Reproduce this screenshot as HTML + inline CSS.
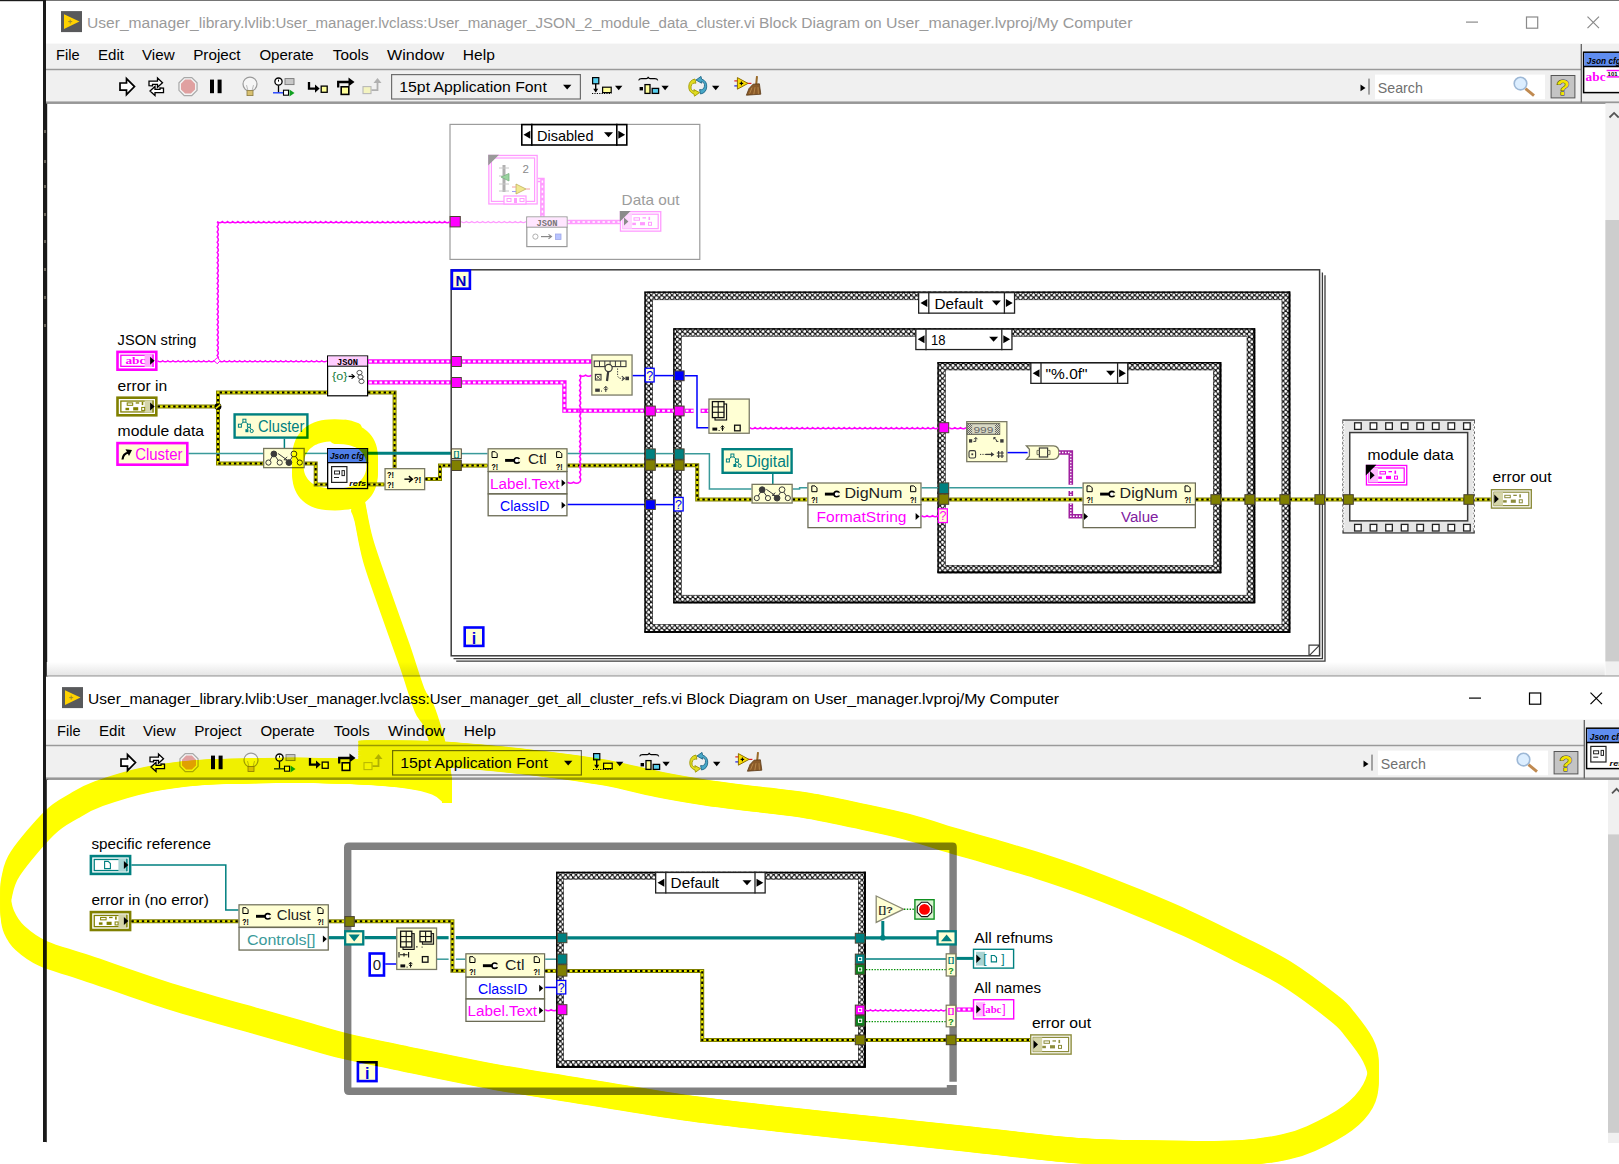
<!DOCTYPE html>
<html><head><meta charset="utf-8"><title>LabVIEW</title>
<style>html,body{margin:0;padding:0;background:#fff;overflow:hidden}svg{display:block}text{white-space:pre}</style>
</head><body>
<svg width="1619" height="1164" viewBox="0 0 1619 1164" shape-rendering="auto">
<defs>
<pattern id="hatch" width="5.2" height="5.2" patternUnits="userSpaceOnUse">
<rect width="5.2" height="5.2" fill="#161616"/>
<path d="M1.3 -0.55L3.15 1.3L1.3 3.15L-0.55 1.3ZM3.9 2.05L5.75 3.9L3.9 5.75L2.05 3.9Z" fill="#fff"/>
</pattern>
<linearGradient id="shadow" x1="0" y1="0" x2="0" y2="1"><stop offset="0" stop-color="#fff"/><stop offset="1" stop-color="#e4e4e4"/></linearGradient>
<pattern id="hatch2" width="2" height="2" patternUnits="userSpaceOnUse"><rect width="2" height="2" fill="#d8d8c4"/><rect width="1" height="1" fill="#666"/><rect x="1" y="1" width="1" height="1" fill="#666"/></pattern></defs>
<rect width="1619" height="1164" fill="#fff"/>

<rect x="0.00" y="0.00" width="1619.00" height="1.20" fill="#1a1a1a" />
<rect x="43.00" y="0.00" width="4.20" height="676.00" fill="#1a1a1a" />
<rect x="43.00" y="676.00" width="5.20" height="466.80" fill="#1a1a1a" />
<rect x="44.20" y="130.00" width="1.60" height="3.00" fill="#7a7468" />
<rect x="44.20" y="160.00" width="1.60" height="3.00" fill="#7a7468" />
<rect x="44.20" y="185.00" width="1.60" height="3.00" fill="#7a7468" />
<rect x="44.20" y="213.00" width="1.60" height="3.00" fill="#7a7468" />
<rect x="44.20" y="240.00" width="1.60" height="3.00" fill="#7a7468" />
<rect x="44.20" y="268.00" width="1.60" height="3.00" fill="#7a7468" />
<rect x="44.20" y="296.00" width="1.60" height="3.00" fill="#7a7468" />
<rect x="44.20" y="324.00" width="1.60" height="3.00" fill="#7a7468" />
<rect x="46.00" y="0.60" width="1573.00" height="43.50" fill="#fff" />
<rect x="61.00" y="11.10" width="21.00" height="21.00" fill="#58595b" />
<path d="M64.00 14.30 L79.50 21.60 L64.00 28.90Z" fill="#ffd200" />
<path d="M68.2 21.6h4M70.2 19.6v4" fill="none" stroke="#9a8a30" stroke-width="1" />
<text x="87.00" y="28.20" font-size="15.3" fill="#9a9a9a" font-family="Liberation Sans, sans-serif" textLength="188.50" lengthAdjust="spacingAndGlyphs" >User_manager_library.lvlib:</text>
<text x="275.50" y="28.20" font-size="15.3" fill="#9a9a9a" font-family="Liberation Sans, sans-serif" textLength="152.00" lengthAdjust="spacingAndGlyphs" >User_manager.lvclass:</text>
<text x="427.50" y="28.20" font-size="15.3" fill="#9a9a9a" font-family="Liberation Sans, sans-serif" textLength="331.50" lengthAdjust="spacingAndGlyphs" >User_manager_JSON_2_module_data_cluster.vi </text>
<text x="759.00" y="28.20" font-size="15.3" fill="#9a9a9a" font-family="Liberation Sans, sans-serif" textLength="127.00" lengthAdjust="spacingAndGlyphs" >Block Diagram on </text>
<text x="886.00" y="28.20" font-size="15.3" fill="#9a9a9a" font-family="Liberation Sans, sans-serif" textLength="246.50" lengthAdjust="spacingAndGlyphs" >User_manager.lvproj/My Computer</text>
<line x1="1466.00" y1="22.10" x2="1478.00" y2="22.10" stroke="#8a8a8a" stroke-width="1.2" />
<rect x="1526.50" y="17.00" width="11.20" height="11.20" fill="none" stroke="#8a8a8a" stroke-width="1.2" />
<path d="M1587.5 16.6l11.5 11.5M1599 16.6l-11.5 11.5" fill="none" stroke="#8a8a8a" stroke-width="1.2" />
<rect x="46.00" y="43.60" width="1573.00" height="59.50" fill="#f0f0f0" />
<line x1="46.00" y1="69.50" x2="1581.00" y2="69.50" stroke="#9a9a9a" stroke-width="1.4" />
<line x1="46.00" y1="102.90" x2="1619.00" y2="102.90" stroke="#7a7a7a" stroke-width="1.5" />
<line x1="46.00" y1="101.50" x2="1619.00" y2="101.50" stroke="#bdbdbd" stroke-width="1" />
<text x="56.00" y="60.20" font-size="15" fill="#000" font-family="Liberation Sans, sans-serif" textLength="23.50" lengthAdjust="spacingAndGlyphs" >File</text>
<text x="98.00" y="60.20" font-size="15" fill="#000" font-family="Liberation Sans, sans-serif" textLength="26.00" lengthAdjust="spacingAndGlyphs" >Edit</text>
<text x="142.00" y="60.20" font-size="15" fill="#000" font-family="Liberation Sans, sans-serif" textLength="32.60" lengthAdjust="spacingAndGlyphs" >View</text>
<text x="193.20" y="60.20" font-size="15" fill="#000" font-family="Liberation Sans, sans-serif" textLength="47.40" lengthAdjust="spacingAndGlyphs" >Project</text>
<text x="259.40" y="60.20" font-size="15" fill="#000" font-family="Liberation Sans, sans-serif" textLength="54.30" lengthAdjust="spacingAndGlyphs" >Operate</text>
<text x="332.80" y="60.20" font-size="15" fill="#000" font-family="Liberation Sans, sans-serif" textLength="35.80" lengthAdjust="spacingAndGlyphs" >Tools</text>
<text x="387.00" y="60.20" font-size="15" fill="#000" font-family="Liberation Sans, sans-serif" textLength="57.20" lengthAdjust="spacingAndGlyphs" >Window</text>
<text x="462.80" y="60.20" font-size="15" fill="#000" font-family="Liberation Sans, sans-serif" textLength="32.00" lengthAdjust="spacingAndGlyphs" >Help</text>
<path d="M120.00 83.00 L126.50 83.00 L126.50 78.60 L134.50 86.60 L126.50 94.60 L126.50 90.20 L120.00 90.20Z" fill="#fff" stroke="#000" stroke-width="1.7" stroke-linejoin="miter"/>
<path d="M149 85.6v-4.5h8.5v-3l5 4.6l-5 4.6v-3h-5v1.5z" fill="#fff" stroke="#000" stroke-width="1.3" />
<path d="M163.5 88.1v4.5h-8.5v3l-5-4.6l5-4.6v3h5v-1.5z" fill="#fff" stroke="#000" stroke-width="1.3" />
<path d="M197.05 90.35 L191.75 95.65 L184.25 95.65 L178.95 90.35 L178.95 82.85 L184.25 77.55 L191.75 77.55 L197.05 82.85Z" fill="#f4f4f4" stroke="#a8a8a8" stroke-width="1.2" />
<path d="M195.02 89.51 L190.91 93.62 L185.09 93.62 L180.98 89.51 L180.98 83.69 L185.09 79.58 L190.91 79.58 L195.02 83.69Z" fill="#e0a0a0" />
<rect x="210.00" y="79.60" width="4.00" height="13.60" fill="#000" />
<rect x="217.60" y="79.60" width="4.00" height="13.60" fill="#000" />
<circle cx="250" cy="84.1" r="7" fill="#f6f6f6" stroke="#9a9a9a" stroke-width="1.2"/>
<rect x="247.00" y="90.60" width="6.00" height="5.00" fill="#d8c070" stroke="#8a7a40" stroke-width="0.8" />
<path d="M247.8 90.1l-1.3-5M252.2 90.1l1.3-5" fill="none" stroke="#aaa" stroke-width="0.8" />
<circle cx="278.5" cy="81.6" r="3.6" fill="#fff" stroke="#000" stroke-width="1.3"/>
<line x1="278.50" y1="81.60" x2="278.50" y2="79.60" stroke="#000" stroke-width="1" />
<line x1="278.50" y1="85.40" x2="278.50" y2="92.60" stroke="#000" stroke-width="1.3" />
<rect x="285.00" y="78.60" width="9.00" height="6.00" fill="#c8c8c8" stroke="#777" stroke-width="0.9" />
<line x1="273.00" y1="92.80" x2="285.00" y2="92.80" stroke="#2040ff" stroke-width="1.4" />
<rect x="283.50" y="90.20" width="5.00" height="5.00" fill="#fff" stroke="#000" stroke-width="1.1" />
<path d="M289.50 89.40 L294.50 92.90 L289.50 96.40Z" fill="#10a020" />
<path d="M309 82.1v6.5h7" fill="none" stroke="#000" stroke-width="2.3" />
<path d="M315.00 84.40 L319.60 88.60 L315.00 92.80Z" fill="#000" />
<rect x="321.20" y="86.10" width="6.00" height="6.20" fill="#ffff9a" stroke="#000" stroke-width="1.3" />
<path d="M338.2 87.6v-5.6h11" fill="none" stroke="#000" stroke-width="2.3" />
<path d="M348.50 77.60 L354.50 82.00 L348.50 86.40Z" fill="#000" />
<rect x="341.20" y="86.80" width="7.60" height="7.60" fill="#ffff9a" stroke="#000" stroke-width="1.6" />
<rect x="363.00" y="86.60" width="8.00" height="7.00" fill="#f4f4c0" stroke="#b8b8b8" stroke-width="1.1" />
<path d="M371.5 90.1h6v-7" fill="none" stroke="#b0b0b0" stroke-width="1.8" />
<path d="M373.50 83.10 L377.50 78.10 L381.50 83.10Z" fill="#b0b0b0" />
<rect x="391.60" y="74.60" width="188.80" height="24.40" fill="#f0f0f0" stroke="#6e6e6e" stroke-width="1.2" />
<text x="399.30" y="91.60" font-size="15" fill="#000" font-family="Liberation Sans, sans-serif" textLength="147.50" lengthAdjust="spacingAndGlyphs" >15pt Application Font</text>
<path d="M563.00 84.80 L571.40 84.80 L567.20 89.40Z" fill="#000" />
<rect x="592.60" y="77.60" width="6.20" height="6.20" fill="#58d0f0" stroke="#000" stroke-width="1.2" />
<line x1="595.70" y1="83.80" x2="595.70" y2="91.60" stroke="#000" stroke-width="1.4" />
<path d="M593.20 88.80 L598.20 88.80 L595.70 92.60Z" fill="#000" />
<line x1="592.00" y1="93.50" x2="611.50" y2="93.50" stroke="#000" stroke-width="1" stroke-dasharray="1.2 1.2"/>
<rect x="602.60" y="87.20" width="8.60" height="5.40" fill="#ffff9a" stroke="#000" stroke-width="1.2" />
<path d="M615.00 85.80 L622.40 85.80 L618.70 90.20Z" fill="#000" />
<path d="M638.6 80.39999999999999q0.6-1.8 3-1.8h4.6q1.6 0 2-1.6q0.4 1.6 2 1.6h4.6q2.4 0 3 1.8" fill="none" stroke="#000" stroke-width="1.1" />
<rect x="639.60" y="87.00" width="3.40" height="3.40" fill="#000" />
<rect x="645.00" y="84.60" width="5.00" height="8.80" fill="#ffff9a" stroke="#000" stroke-width="1.3" />
<rect x="652.20" y="88.40" width="6.40" height="5.00" fill="#58d0f0" stroke="#000" stroke-width="1.3" />
<path d="M661.40 85.80 L668.80 85.80 L665.10 90.20Z" fill="#000" />
<path d="M695 79.0a7.8 7.8 0 0 0 -1 15l0.5 2.2l5-3.6l-5.6-3l0.4 1.6a4 4 0 0 1 1.6-8z" fill="#e0dc20" stroke="#a09800" stroke-width="0.9" />
<path d="M700.5 94.0a7.8 7.8 0 0 0 1-15l-0.5-2.6l-5 3.6l5.6 3.2l-0.4-1.6a4 4 0 0 1-1.6 8z" fill="#48a8c8" stroke="#206888" stroke-width="0.9" />
<path d="M712.00 85.80 L719.40 85.80 L715.70 90.20Z" fill="#000" />
<line x1="734.30" y1="80.90" x2="738.00" y2="80.90" stroke="#e02020" stroke-width="1.2" />
<line x1="734.30" y1="85.90" x2="738.00" y2="85.90" stroke="#2020e0" stroke-width="1.2" />
<line x1="747.00" y1="83.40" x2="751.40" y2="83.40" stroke="#e02020" stroke-width="1.2" />
<path d="M737.40 77.60 L748.00 83.40 L737.40 89.20Z" fill="#f8dc00" stroke="#907000" stroke-width="1" />
<path d="M739.6 83.39999999999999h3.6M741.4 81.6v3.6" fill="none" stroke="#000" stroke-width="1.1" />
<line x1="757.00" y1="76.10" x2="756.20" y2="84.60" stroke="#9a6a28" stroke-width="2" />
<path d="M753.00 84.20 L759.40 83.80 L760.80 94.20 L746.40 95.20 L749.00 88.60Z" fill="#8a5a28" stroke="#5a3a18" stroke-width="0.8" />
<path d="M752 87.6l-2.4 6M755 87.19999999999999l-1.2 7M758 87.19999999999999l0.4 6.6" fill="none" stroke="#c09050" stroke-width="0.8" />
<path d="M1360.50 84.60 L1365.50 87.90 L1360.50 91.20Z" fill="#000" />
<line x1="1369.00" y1="78.60" x2="1369.00" y2="94.60" stroke="#555" stroke-width="1" />
<rect x="1375.00" y="74.60" width="170.00" height="24.60" fill="#fff" />
<text x="1377.80" y="92.90" font-size="15" fill="#707070" font-family="Liberation Sans, sans-serif" textLength="45.00" lengthAdjust="spacingAndGlyphs" >Search</text>
<circle cx="1520.5" cy="83.6" r="6.3" fill="#dceeff" stroke="#9db8d6" stroke-width="1.6"/>
<line x1="1525.50" y1="88.60" x2="1534.00" y2="95.60" stroke="#c08a50" stroke-width="3" />
<rect x="1551.10" y="75.50" width="23.80" height="22.40" fill="#c4c4c4" stroke="#555" stroke-width="1" />
<text x="1563.00" y="95.10" font-size="22" fill="#f4e400" font-family="Liberation Sans, sans-serif" text-anchor="middle" font-weight="bold" stroke="#333" stroke-width="0.9" paint-order="stroke">?</text>
<line x1="1581.30" y1="44.10" x2="1581.30" y2="102.60" stroke="#606060" stroke-width="1.3" />
<rect x="1583.60" y="52.20" width="40.00" height="40.40" fill="#fff" stroke="#000" stroke-width="1.5" />
<rect x="1584.40" y="53.00" width="40.00" height="13.00" fill="#5f8df0" />
<line x1="1583.60" y1="66.50" x2="1623.60" y2="66.50" stroke="#000" stroke-width="1.3" />
<text x="1586.80" y="63.60" font-size="8.6" fill="#000" font-family="Liberation Sans, sans-serif" textLength="34.00" lengthAdjust="spacingAndGlyphs" font-weight="bold" font-style="italic">Json cfg</text>
<text x="1585.60" y="80.70" font-size="11.5" fill="#ff00ff"  textLength="20.00" lengthAdjust="spacingAndGlyphs" font-weight="bold" font-family="Liberation Serif, serif">abc</text>
<rect x="1606.60" y="69.80" width="14.00" height="1.40" fill="#ff00ff" />
<rect x="1606.60" y="76.20" width="14.00" height="1.40" fill="#ff00ff" />
<text x="1607.60" y="75.80" font-size="5.5" fill="#000" font-family="Liberation Sans, sans-serif" textLength="10.00" lengthAdjust="spacingAndGlyphs" font-weight="bold" >101</text>
<rect x="1605.40" y="103.20" width="14.00" height="573.00" fill="#f0f0f0" />
<path d="M1609.5 117.5l4.6-4.6l4.6 4.6" fill="none" stroke="#555" stroke-width="1.8" />
<rect x="1605.40" y="220.00" width="14.00" height="441.40" fill="#cdcdcd" />
<rect x="46.80" y="662.00" width="1558.00" height="14.00" fill="url(#shadow)" />
<rect x="450.00" y="124.40" width="249.80" height="135.00" fill="#fff" stroke="#9c9c9c" stroke-width="1.2" />
<path d="M461.00 221.60q2.71 2.20 5.42 0.00q2.71 2.20 5.42 0.00q2.71 2.20 5.42 0.00q2.71 2.20 5.42 0.00q2.71 2.20 5.42 0.00q2.71 2.20 5.42 0.00q2.71 2.20 5.42 0.00q2.71 2.20 5.42 0.00q2.71 2.20 5.42 0.00q2.71 2.20 5.42 0.00q2.71 2.20 5.42 0.00q2.71 2.20 5.42 0.00" fill="none" stroke="#ff9cff" stroke-width="1.3" />
<rect x="488.85" y="155.45" width="48.30" height="48.50" fill="#fff" stroke="#ff9cff" stroke-width="1.3" />
<rect x="491.40" y="158.00" width="43.20" height="43.40" fill="#fff" stroke="#ff9cff" stroke-width="1.2" />
<path d="M488.20 154.80 L499.00 154.80 L488.20 165.60Z" fill="#9a9a9a" />
<line x1="504.00" y1="165.00" x2="504.00" y2="192.00" stroke="#b0b0b0" stroke-width="3" />
<line x1="499.00" y1="168.00" x2="509.00" y2="168.00" stroke="#c8c8c8" stroke-width="1" />
<line x1="499.00" y1="176.00" x2="509.00" y2="176.00" stroke="#c8c8c8" stroke-width="1" />
<line x1="499.00" y1="184.00" x2="509.00" y2="184.00" stroke="#c8c8c8" stroke-width="1" />
<line x1="499.00" y1="191.00" x2="509.00" y2="191.00" stroke="#c8c8c8" stroke-width="1" />
<path d="M501.00 177.00 L509.00 173.50 L509.00 181.00Z" fill="#9ad4a0" stroke="#7ab080" stroke-width="0.8" />
<text x="522.50" y="173.00" font-size="11.5" fill="#8a8a8a" font-family="Liberation Sans, sans-serif" >2</text>
<path d="M516.00 184.00 L526.00 189.00 L516.00 194.00Z" fill="#f0e890" stroke="#c0b060" stroke-width="0.8" />
<line x1="512.00" y1="187.00" x2="516.00" y2="187.00" stroke="#f0a0a0" stroke-width="1" />
<line x1="512.00" y1="191.50" x2="516.00" y2="191.50" stroke="#a0a0f0" stroke-width="1" />
<line x1="526.00" y1="189.00" x2="530.00" y2="189.00" stroke="#f0a0a0" stroke-width="1" />
<rect x="504.00" y="196.00" width="22.00" height="8.00" fill="#fff" stroke="#ff9cff" stroke-width="1.2" />
<rect x="507.00" y="198.50" width="4.00" height="3.00" fill="none" stroke="#ff9cff" stroke-width="1" />
<rect x="514.00" y="198.00" width="3.00" height="5.00" fill="#ff9cff" />
<rect x="520.00" y="198.50" width="4.00" height="3.00" fill="none" stroke="#ff9cff" stroke-width="1" />
<polyline points="537.80,180.00 542.40,180.00 542.40,216.50" fill="none" stroke="#ff9cff" stroke-width="4.6" />
<polyline points="537.80,180.00 542.40,180.00 542.40,216.50" fill="none" stroke="#fff" stroke-width="1.5" stroke-dasharray="2.4 2.6"/>
<polyline points="567.50,222.00 620.00,222.00" fill="none" stroke="#ff9cff" stroke-width="4.6" />
<polyline points="567.50,222.00 620.00,222.00" fill="none" stroke="#fff" stroke-width="1.5" stroke-dasharray="2.4 2.6"/>
<rect x="526.80" y="217.00" width="40.20" height="29.60" fill="#fff" stroke="#999" stroke-width="1.2" />
<rect x="527.20" y="217.40" width="39.40" height="9.60" fill="#ffe6ff" />
<line x1="526.20" y1="227.20" x2="567.60" y2="227.20" stroke="#999" stroke-width="1" />
<text x="546.90" y="225.70" font-size="8.6" fill="#777"  textLength="21.00" lengthAdjust="spacingAndGlyphs" text-anchor="middle" font-weight="bold" font-family="Liberation Mono, monospace">JSON</text>
<circle cx="535.4" cy="236.6" r="2.6" fill="none" stroke="#b0b0b0" stroke-width="1"/>
<line x1="541.00" y1="236.60" x2="551.00" y2="236.60" stroke="#888" stroke-width="1.2" />
<path d="M548.5 234.4l3 2.2l-3 2.2" fill="none" stroke="#888" stroke-width="1.1" />
<rect x="555.50" y="234.00" width="5.50" height="5.50" fill="#b8c4ff" stroke="#a0a8e8" stroke-width="0.8" />
<text x="621.60" y="205.40" font-size="15" fill="#9c9c9c" font-family="Liberation Sans, sans-serif" textLength="58.00" lengthAdjust="spacingAndGlyphs" >Data out</text>
<rect x="620.45" y="211.65" width="40.30" height="19.50" fill="#fff" stroke="#ff9cff" stroke-width="1.3" />
<rect x="623.00" y="214.20" width="35.20" height="14.40" fill="#fff" stroke="#ff9cff" stroke-width="1.2" />
<rect x="623.00" y="214.20" width="9.00" height="14.40" fill="#ffd8ff" />
<path d="M619.80 211.00 L630.60 211.00 L619.80 221.80Z" fill="#8a8a8a" />
<path d="M624.00 217.40 L628.40 221.50 L624.00 225.60Z" fill="#8a8a8a" />
<rect x="634.00" y="217.80" width="5.50" height="2.40" fill="#fff" stroke="#ff9cff" stroke-width="1" />
<rect x="642.50" y="217.20" width="3.50" height="1.30" fill="#ff9cff" />
<rect x="648.50" y="216.80" width="1.60" height="3.20" fill="#ff9cff" />
<rect x="632.30" y="222.70" width="3.60" height="2.40" fill="#ff9cff" />
<rect x="640.00" y="222.10" width="5.00" height="3.20" fill="#ff9cff" />
<rect x="648.50" y="222.30" width="3.00" height="3.00" fill="#fff" stroke="#ff9cff" stroke-width="1" />
<rect x="450.10" y="216.50" width="10.20" height="10.40" fill="#ff00ff" stroke="#4a4230" stroke-width="1" />
<rect x="521.80" y="124.60" width="105.00" height="20.40" fill="#fff" stroke="#000" stroke-width="1.6" />
<line x1="531.80" y1="123.80" x2="531.80" y2="145.80" stroke="#000" stroke-width="1.6" />
<line x1="616.80" y1="123.80" x2="616.80" y2="145.80" stroke="#000" stroke-width="1.6" />
<path d="M523.50 134.80 L530.30 130.80 L530.30 138.80Z" fill="#000" />
<path d="M625.10 134.80 L618.30 130.80 L618.30 138.80Z" fill="#000" />
<path d="M604.00 132.30 L613.00 132.30 L608.50 137.30Z" fill="#000" />
<text x="537.00" y="140.50" font-size="15" fill="#000" font-family="Liberation Sans, sans-serif" textLength="56.50" lengthAdjust="spacingAndGlyphs" >Disabled</text>
<path d="M217.20 360.70q2.20 -2.58 0.00 -5.15q2.20 -2.58 0.00 -5.15q2.20 -2.58 0.00 -5.15q2.20 -2.58 0.00 -5.15q2.20 -2.58 0.00 -5.15q2.20 -2.58 0.00 -5.15q2.20 -2.58 0.00 -5.15q2.20 -2.58 0.00 -5.15q2.20 -2.58 0.00 -5.15q2.20 -2.58 0.00 -5.15q2.20 -2.58 0.00 -5.15q2.20 -2.58 0.00 -5.15q2.20 -2.58 0.00 -5.15q2.20 -2.58 0.00 -5.15q2.20 -2.58 0.00 -5.15q2.20 -2.58 0.00 -5.15q2.20 -2.58 0.00 -5.15q2.20 -2.58 0.00 -5.15q2.20 -2.58 0.00 -5.15q2.20 -2.58 0.00 -5.15q2.20 -2.58 0.00 -5.15q2.20 -2.58 0.00 -5.15q2.20 -2.58 0.00 -5.15q2.20 -2.58 0.00 -5.15q2.20 -2.58 0.00 -5.15q2.20 -2.58 0.00 -5.15q2.20 -2.58 0.00 -5.15" fill="none" stroke="#ff00ff" stroke-width="1.5" />
<path d="M217.20 221.60q2.59 2.20 5.17 0.00q2.59 2.20 5.17 0.00q2.59 2.20 5.17 0.00q2.59 2.20 5.17 0.00q2.59 2.20 5.17 0.00q2.59 2.20 5.17 0.00q2.59 2.20 5.17 0.00q2.59 2.20 5.17 0.00q2.59 2.20 5.17 0.00q2.59 2.20 5.17 0.00q2.59 2.20 5.17 0.00q2.59 2.20 5.17 0.00q2.59 2.20 5.17 0.00q2.59 2.20 5.17 0.00q2.59 2.20 5.17 0.00q2.59 2.20 5.17 0.00q2.59 2.20 5.17 0.00q2.59 2.20 5.17 0.00q2.59 2.20 5.17 0.00q2.59 2.20 5.17 0.00q2.59 2.20 5.17 0.00q2.59 2.20 5.17 0.00q2.59 2.20 5.17 0.00q2.59 2.20 5.17 0.00q2.59 2.20 5.17 0.00q2.59 2.20 5.17 0.00q2.59 2.20 5.17 0.00q2.59 2.20 5.17 0.00q2.59 2.20 5.17 0.00q2.59 2.20 5.17 0.00q2.59 2.20 5.17 0.00q2.59 2.20 5.17 0.00q2.59 2.20 5.17 0.00q2.59 2.20 5.17 0.00q2.59 2.20 5.17 0.00q2.59 2.20 5.17 0.00q2.59 2.20 5.17 0.00q2.59 2.20 5.17 0.00q2.59 2.20 5.17 0.00q2.59 2.20 5.17 0.00q2.59 2.20 5.17 0.00q2.59 2.20 5.17 0.00q2.59 2.20 5.17 0.00q2.59 2.20 5.17 0.00q2.59 2.20 5.17 0.00" fill="none" stroke="#ff00ff" stroke-width="1.5" />
<text x="117.60" y="345.00" font-size="15" fill="#000" font-family="Liberation Sans, sans-serif" textLength="78.70" lengthAdjust="spacingAndGlyphs" >JSON string</text>
<rect x="117.50" y="351.90" width="38.80" height="17.80" fill="#fff" stroke="#ff00ff" stroke-width="2.6" />
<rect x="120.85" y="355.25" width="32.10" height="11.10" fill="#fff" stroke="#ff00ff" stroke-width="1.3" />
<rect x="144.60" y="354.60" width="9.00" height="12.40" fill="#ffa8ff" />
<line x1="153.00" y1="354.60" x2="153.00" y2="367.00" stroke="#ff00ff" stroke-width="1.3" />
<path d="M150.10 356.80 L154.60 360.80 L150.10 364.80Z" fill="#000" />
<text x="125.40" y="364.00" font-size="10.5" fill="#ff00ff"  textLength="20.00" lengthAdjust="spacingAndGlyphs" font-weight="bold" font-family="Liberation Serif, serif">abc</text>
<text x="117.60" y="390.60" font-size="15" fill="#000" font-family="Liberation Sans, sans-serif" textLength="49.50" lengthAdjust="spacingAndGlyphs" >error in</text>
<rect x="117.50" y="397.70" width="38.80" height="17.60" fill="#fff" stroke="#808000" stroke-width="2.6" />
<rect x="120.85" y="401.05" width="32.10" height="10.90" fill="#fff" stroke="#808000" stroke-width="1.3" />
<rect x="144.60" y="400.40" width="9.00" height="12.20" fill="#d4d4a8" />
<line x1="153.00" y1="400.40" x2="153.00" y2="412.60" stroke="#808000" stroke-width="1.3" />
<path d="M150.10 402.50 L154.60 406.50 L150.10 410.50Z" fill="#000" />
<rect x="127.20" y="402.90" width="5.50" height="2.40" fill="#fff" stroke="#808000" stroke-width="1" />
<rect x="135.70" y="402.30" width="3.50" height="1.30" fill="#808000" />
<rect x="141.70" y="401.90" width="1.60" height="3.20" fill="#808000" />
<rect x="125.50" y="407.80" width="3.60" height="2.40" fill="#808000" />
<rect x="133.20" y="407.20" width="5.00" height="3.20" fill="#808000" />
<rect x="141.70" y="407.40" width="3.00" height="3.00" fill="#fff" stroke="#808000" stroke-width="1" />
<text x="117.60" y="435.80" font-size="15" fill="#000" font-family="Liberation Sans, sans-serif" textLength="86.50" lengthAdjust="spacingAndGlyphs" >module data</text>
<rect x="117.50" y="443.10" width="69.80" height="21.60" fill="#ffffd4" stroke="#ff00ff" stroke-width="2.6" />
<path d="M122.5 459.5q0.5-6 6-7" fill="none" stroke="#000" stroke-width="2.2" />
<path d="M125.50 449.20 L132.00 450.00 L129.00 456.00Z" fill="#000" />
<text x="135.20" y="459.60" font-size="16" fill="#ff00ff" font-family="Liberation Sans, sans-serif" textLength="47.20" lengthAdjust="spacingAndGlyphs" >Cluster</text>
<path d="M157.60 360.70q2.57 2.20 5.13 0.00q2.57 2.20 5.13 0.00q2.57 2.20 5.13 0.00q2.57 2.20 5.13 0.00q2.57 2.20 5.13 0.00q2.57 2.20 5.13 0.00q2.57 2.20 5.13 0.00q2.57 2.20 5.13 0.00q2.57 2.20 5.13 0.00q2.57 2.20 5.13 0.00q2.57 2.20 5.13 0.00q2.57 2.20 5.13 0.00q2.57 2.20 5.13 0.00q2.57 2.20 5.13 0.00q2.57 2.20 5.13 0.00q2.57 2.20 5.13 0.00q2.57 2.20 5.13 0.00q2.57 2.20 5.13 0.00q2.57 2.20 5.13 0.00q2.57 2.20 5.13 0.00q2.57 2.20 5.13 0.00q2.57 2.20 5.13 0.00q2.57 2.20 5.13 0.00q2.57 2.20 5.13 0.00q2.57 2.20 5.13 0.00q2.57 2.20 5.13 0.00q2.57 2.20 5.13 0.00q2.57 2.20 5.13 0.00q2.57 2.20 5.13 0.00q2.57 2.20 5.13 0.00q2.57 2.20 5.13 0.00q2.57 2.20 5.13 0.00q2.57 2.20 5.13 0.00" fill="none" stroke="#ff00ff" stroke-width="1.5" />
<path d="M217.20 357.60 L220.30 360.70 L217.20 363.80 L214.10 360.70Z" fill="#fff" stroke="#ff00ff" stroke-width="1" />
<polyline points="157.60,406.60 218.00,406.60" fill="none" stroke="#808000" stroke-width="4.0" stroke-linejoin="miter"/>
<polyline points="157.60,406.60 218.00,406.60" fill="none" stroke="#e8e800" stroke-width="2.0" />
<polyline points="157.60,406.60 218.00,406.60" fill="none" stroke="#000" stroke-width="2.0" stroke-dasharray="2.4 2.8"/>
<polyline points="218.00,406.60 218.00,392.60 327.00,392.60" fill="none" stroke="#808000" stroke-width="4.0" stroke-linejoin="miter"/>
<polyline points="218.00,406.60 218.00,392.60 327.00,392.60" fill="none" stroke="#e8e800" stroke-width="2.0" />
<polyline points="218.00,406.60 218.00,392.60 327.00,392.60" fill="none" stroke="#000" stroke-width="2.0" stroke-dasharray="2.4 2.8"/>
<polyline points="218.00,406.60 218.00,463.50 263.00,463.50" fill="none" stroke="#808000" stroke-width="4.0" stroke-linejoin="miter"/>
<polyline points="218.00,406.60 218.00,463.50 263.00,463.50" fill="none" stroke="#e8e800" stroke-width="2.0" />
<polyline points="218.00,406.60 218.00,463.50 263.00,463.50" fill="none" stroke="#000" stroke-width="2.0" stroke-dasharray="2.4 2.8"/>
<polyline points="368.00,392.60 394.60,392.60 394.60,468.00" fill="none" stroke="#808000" stroke-width="4.0" stroke-linejoin="miter"/>
<polyline points="368.00,392.60 394.60,392.60 394.60,468.00" fill="none" stroke="#e8e800" stroke-width="2.0" />
<polyline points="368.00,392.60 394.60,392.60 394.60,468.00" fill="none" stroke="#000" stroke-width="2.0" stroke-dasharray="2.4 2.8"/>
<circle cx="218" cy="406.6" r="3.4" fill="#000"/>
<line x1="215.80" y1="408.40" x2="220.40" y2="404.60" stroke="#e6e600" stroke-width="1.6" />
<polyline points="304.70,463.50 315.70,463.50 315.70,484.40 327.00,484.40" fill="none" stroke="#808000" stroke-width="4.0" stroke-linejoin="miter"/>
<polyline points="304.70,463.50 315.70,463.50 315.70,484.40 327.00,484.40" fill="none" stroke="#e8e800" stroke-width="2.0" />
<polyline points="304.70,463.50 315.70,463.50 315.70,484.40 327.00,484.40" fill="none" stroke="#000" stroke-width="2.0" stroke-dasharray="2.4 2.8"/>
<polyline points="368.00,484.40 384.40,484.40" fill="none" stroke="#808000" stroke-width="4.0" stroke-linejoin="miter"/>
<polyline points="368.00,484.40 384.40,484.40" fill="none" stroke="#e8e800" stroke-width="2.0" />
<polyline points="368.00,484.40 384.40,484.40" fill="none" stroke="#000" stroke-width="2.0" stroke-dasharray="2.4 2.8"/>
<polyline points="425.20,479.00 440.00,479.00 440.00,465.40 451.00,465.40" fill="none" stroke="#808000" stroke-width="4.0" stroke-linejoin="miter"/>
<polyline points="425.20,479.00 440.00,479.00 440.00,465.40 451.00,465.40" fill="none" stroke="#e8e800" stroke-width="2.0" />
<polyline points="425.20,479.00 440.00,479.00 440.00,465.40 451.00,465.40" fill="none" stroke="#000" stroke-width="2.0" stroke-dasharray="2.4 2.8"/>
<polyline points="188.60,453.40 263.00,453.40" fill="none" stroke="#3a9a9a" stroke-width="1.5" />
<polyline points="284.40,438.60 284.40,448.00" fill="none" stroke="#008080" stroke-width="1.5" />
<polyline points="304.70,453.40 327.00,453.40" fill="none" stroke="#3a9a9a" stroke-width="1.5" />
<polyline points="368.00,453.30 451.00,453.30" fill="none" stroke="#008080" stroke-width="3" />
<rect x="234.60" y="414.40" width="72.80" height="23.20" fill="#ffffd4" stroke="#008080" stroke-width="2.4" />
<rect x="242.90" y="419.20" width="3.00" height="3.00" fill="none" stroke="#008080" stroke-width="1" />
<rect x="238.40" y="424.20" width="3.00" height="3.00" fill="none" stroke="#008080" stroke-width="1" />
<rect x="247.40" y="424.20" width="3.00" height="3.00" fill="none" stroke="#008080" stroke-width="1" />
<line x1="242.90" y1="422.20" x2="241.40" y2="424.20" stroke="#008080" stroke-width="1" />
<line x1="245.90" y1="422.20" x2="247.90" y2="424.20" stroke="#008080" stroke-width="1" />
<rect x="245.40" y="429.20" width="3.00" height="3.00" fill="#008080" />
<circle cx="251.70000000000002" cy="431.0" r="1.6" fill="none" stroke="#008080" stroke-width="1"/>
<line x1="248.90" y1="427.20" x2="246.90" y2="429.20" stroke="#008080" stroke-width="1" />
<line x1="248.90" y1="427.20" x2="251.40" y2="429.20" stroke="#008080" stroke-width="1" />
<text x="257.90" y="432.10" font-size="16" fill="#008080" font-family="Liberation Sans, sans-serif" textLength="46.50" lengthAdjust="spacingAndGlyphs" >Cluster</text>
<rect x="263.65" y="448.45" width="40.50" height="19.20" fill="#ffffd4" stroke="#77775f" stroke-width="1.3" />
<line x1="273.87" y1="453.95" x2="268.43" y2="462.56" stroke="#3a3a3a" stroke-width="1" />
<line x1="273.87" y1="453.95" x2="279.72" y2="462.56" stroke="#3a3a3a" stroke-width="1" />
<line x1="293.93" y1="453.95" x2="288.92" y2="462.56" stroke="#3a3a3a" stroke-width="1" />
<line x1="293.93" y1="453.95" x2="299.78" y2="462.56" stroke="#3a3a3a" stroke-width="1" />
<line x1="278.05" y1="453.54" x2="287.24" y2="460.10" stroke="#3a3a3a" stroke-width="1" />
<path d="M287.24 460.10 L283.90 459.69 L287.24 457.03" fill="none" stroke="#3a3a3a" stroke-width="1" />
<circle cx="273.87" cy="453.95" r="2.9" fill="#3a3a3a" stroke="#3a3a3a" stroke-width="1"/>
<circle cx="268.43" cy="462.56" r="2.6" fill="#ffffd4" stroke="#3a3a3a" stroke-width="1"/>
<circle cx="279.72" cy="462.56" r="2.6" fill="#ffffd4" stroke="#3a3a3a" stroke-width="1"/>
<circle cx="293.93" cy="453.95" r="2.9" fill="#ffffd4" stroke="#3a3a3a" stroke-width="1"/>
<circle cx="288.92" cy="462.56" r="2.9" fill="#3a3a3a" stroke="#3a3a3a" stroke-width="1"/>
<circle cx="299.78" cy="462.56" r="2.6" fill="#ffffd4" stroke="#3a3a3a" stroke-width="1"/>
<rect x="327.60" y="356.00" width="40.00" height="39.80" fill="#fff" stroke="#000" stroke-width="1.2" />
<rect x="328.00" y="356.40" width="39.20" height="9.60" fill="#ffccff" />
<line x1="327.00" y1="366.20" x2="368.20" y2="366.20" stroke="#000" stroke-width="1" />
<text x="347.60" y="364.70" font-size="8.6" fill="#000"  textLength="21.00" lengthAdjust="spacingAndGlyphs" text-anchor="middle" font-weight="bold" font-family="Liberation Mono, monospace">JSON</text>
<text x="332.00" y="380.40" font-size="11.5" fill="#208040" font-family="Liberation Sans, sans-serif" textLength="15.50" lengthAdjust="spacingAndGlyphs" >{o}</text>
<line x1="348.60" y1="376.40" x2="354.00" y2="376.40" stroke="#000" stroke-width="1.3" />
<path d="M351.6 374.2l2.8 2.2l-2.8 2.2" fill="none" stroke="#000" stroke-width="1.1" />
<ellipse cx="359.5" cy="372.6" rx="2.6" ry="2.2" fill="none" stroke="#555" stroke-width="1"/><ellipse cx="360.5" cy="377" rx="2.6" ry="2.2" fill="none" stroke="#555" stroke-width="1"/><ellipse cx="361.5" cy="381.4" rx="2.6" ry="2.2" fill="none" stroke="#555" stroke-width="1"/>
<rect x="327.65" y="448.65" width="39.90" height="39.90" fill="#fff" stroke="#000" stroke-width="1.3" />
<rect x="328.00" y="449.00" width="39.20" height="13.20" fill="#4f7fe8" />
<line x1="327.00" y1="462.60" x2="368.20" y2="462.60" stroke="#000" stroke-width="1.2" />
<text x="330.00" y="459.40" font-size="8.6" fill="#000" font-family="Liberation Sans, sans-serif" textLength="34.00" lengthAdjust="spacingAndGlyphs" font-weight="bold" font-style="italic">Json cfg</text>
<rect x="331.60" y="466.60" width="15.30" height="15.80" fill="#fff" stroke="#222" stroke-width="1.2" />
<rect x="334.50" y="471.00" width="5.00" height="3.00" fill="none" stroke="#222" stroke-width="1" />
<rect x="342.00" y="470.60" width="2.40" height="5.00" fill="none" stroke="#222" stroke-width="1" />
<line x1="334.00" y1="477.50" x2="339.00" y2="477.50" stroke="#222" stroke-width="1" />
<text x="349.20" y="486.20" font-size="8" fill="#000" font-family="Liberation Sans, sans-serif" textLength="17.00" lengthAdjust="spacingAndGlyphs" font-weight="bold" font-style="italic">refs</text>
<rect x="385.05" y="468.65" width="39.60" height="21.00" fill="#ffffd4" stroke="#7a7a66" stroke-width="1.3" />
<text x="386.90" y="477.60" font-size="8.5" fill="#000" font-family="Liberation Sans, sans-serif" textLength="7.00" lengthAdjust="spacingAndGlyphs" font-weight="bold" >?!</text>
<text x="386.90" y="488.30" font-size="8.5" fill="#000" font-family="Liberation Sans, sans-serif" textLength="7.00" lengthAdjust="spacingAndGlyphs" font-weight="bold" >?!</text>
<line x1="404.40" y1="479.15" x2="411.40" y2="479.15" stroke="#000" stroke-width="1.4" />
<path d="M408.90 476.15 L412.40 479.15 L408.90 482.15" fill="none" stroke="#000" stroke-width="1.4" />
<text x="413.40" y="483.15" font-size="9" fill="#000" font-family="Liberation Sans, sans-serif" textLength="8.00" lengthAdjust="spacingAndGlyphs" font-weight="bold" >?!</text>
<polyline points="368.00,361.50 451.00,361.50" fill="none" stroke="#ff00ff" stroke-width="4.3" />
<polyline points="368.00,361.50 451.00,361.50" fill="none" stroke="#fff" stroke-width="2.0" stroke-dasharray="2.7 2.45" stroke-dashoffset="-1.2"/>
<polyline points="368.00,382.40 451.00,382.40" fill="none" stroke="#ff00ff" stroke-width="4.3" />
<polyline points="368.00,382.40 451.00,382.40" fill="none" stroke="#fff" stroke-width="2.0" stroke-dasharray="2.7 2.45" stroke-dashoffset="-1.2"/>
<path d="M456.2 661.2H1325V275.2" fill="none" stroke="#3c3c3c" stroke-width="1.3" />
<path d="M453.5 658.6H1322.4V272.6" fill="none" stroke="#3c3c3c" stroke-width="1.3" />
<rect x="451.20" y="269.80" width="868.40" height="386.00" fill="#fff" stroke="#3c3c3c" stroke-width="1.5" />
<path d="M1309 655.8l10.6-10.6M1309 655.8v-10.6h10.6" fill="none" stroke="#3c3c3c" stroke-width="1.2" />
<rect x="451.90" y="270.50" width="18.00" height="18.20" fill="#ffffd4" stroke="#0000ff" stroke-width="2.6" />
<text x="461.00" y="285.80" font-size="15" fill="#0000c0" font-family="Liberation Sans, sans-serif" text-anchor="middle" font-weight="bold" >N</text>
<rect x="464.70" y="627.50" width="18.60" height="18.40" fill="#ffffd4" stroke="#0000ff" stroke-width="2.6" />
<text x="474.00" y="643.50" font-size="16" fill="#0000e0" font-family="Liberation Sans, sans-serif" text-anchor="middle" font-weight="bold" >i</text>
<polyline points="461.50,361.50 591.60,361.50" fill="none" stroke="#ff00ff" stroke-width="4.3" />
<polyline points="461.50,361.50 591.60,361.50" fill="none" stroke="#fff" stroke-width="2.0" stroke-dasharray="2.7 2.45" stroke-dashoffset="-1.2"/>
<polyline points="461.50,382.40 564.40,382.40 564.40,410.70 646.00,410.70" fill="none" stroke="#ff00ff" stroke-width="4.3" />
<polyline points="461.50,382.40 564.40,382.40 564.40,410.70 646.00,410.70" fill="none" stroke="#fff" stroke-width="2.0" stroke-dasharray="2.7 2.45" stroke-dashoffset="-1.2"/>
<polyline points="461.00,453.60 487.50,453.60" fill="none" stroke="#3a9a9a" stroke-width="1.5" />
<polyline points="567.50,453.60 646.00,453.60" fill="none" stroke="#3a9a9a" stroke-width="1.5" />
<polyline points="461.00,465.60 487.50,465.60" fill="none" stroke="#808000" stroke-width="4.0" stroke-linejoin="miter"/>
<polyline points="461.00,465.60 487.50,465.60" fill="none" stroke="#e8e800" stroke-width="2.0" />
<polyline points="461.00,465.60 487.50,465.60" fill="none" stroke="#000" stroke-width="2.0" stroke-dasharray="2.4 2.8"/>
<polyline points="567.50,465.60 646.00,465.60" fill="none" stroke="#808000" stroke-width="4.0" stroke-linejoin="miter"/>
<polyline points="567.50,465.60 646.00,465.60" fill="none" stroke="#e8e800" stroke-width="2.0" />
<polyline points="567.50,465.60 646.00,465.60" fill="none" stroke="#000" stroke-width="2.0" stroke-dasharray="2.4 2.8"/>
<polyline points="567.50,504.40 646.00,504.40" fill="none" stroke="#0000ff" stroke-width="1.5" />
<path d="M567.50 482.20q3.03 2.20 6.05 0.00q3.03 2.20 6.05 0.00" fill="none" stroke="#ff00ff" stroke-width="1.5" />
<path d="M579.60 482.20q2.20 -2.55 0.00 -5.10q2.20 -2.55 0.00 -5.10q2.20 -2.55 0.00 -5.10q2.20 -2.55 0.00 -5.10q2.20 -2.55 0.00 -5.10q2.20 -2.55 0.00 -5.10q2.20 -2.55 0.00 -5.10q2.20 -2.55 0.00 -5.10q2.20 -2.55 0.00 -5.10q2.20 -2.55 0.00 -5.10q2.20 -2.55 0.00 -5.10q2.20 -2.55 0.00 -5.10q2.20 -2.55 0.00 -5.10q2.20 -2.55 0.00 -5.10q2.20 -2.55 0.00 -5.10q2.20 -2.55 0.00 -5.10q2.20 -2.55 0.00 -5.10q2.20 -2.55 0.00 -5.10q2.20 -2.55 0.00 -5.10q2.20 -2.55 0.00 -5.10q2.20 -2.55 0.00 -5.10" fill="none" stroke="#ff00ff" stroke-width="1.5" />
<path d="M579.60 375.20q3.00 2.20 6.00 0.00q3.00 2.20 6.00 0.00" fill="none" stroke="#ff00ff" stroke-width="1.5" />
<rect x="451.50" y="356.50" width="9.80" height="10.00" fill="#ff00ff" stroke="#4a4230" stroke-width="1" />
<rect x="451.50" y="377.50" width="9.80" height="10.00" fill="#ff00ff" stroke="#4a4230" stroke-width="1" />
<rect x="451.50" y="448.90" width="9.80" height="9.60" fill="#ffffd4" stroke="#4a4230" stroke-width="1" />
<text x="453.60" y="456.40" font-size="7" fill="#008080" font-family="Liberation Sans, sans-serif" textLength="5.60" lengthAdjust="spacingAndGlyphs" font-weight="bold" >[]</text>
<rect x="451.50" y="460.10" width="9.80" height="10.40" fill="#808000" stroke="#4a4230" stroke-width="1" />
<rect x="488.10" y="448.80" width="78.90" height="22.60" fill="#ffffd4" stroke="#6b6b55" stroke-width="1.2" />
<path d="M492.0 451.7h3.2l2 2v3.8h-5.2z" fill="none" stroke="#000" stroke-width="1" />
<text x="491.40" y="469.60" font-size="8.4" fill="#000" font-family="Liberation Sans, sans-serif" textLength="6.60" lengthAdjust="spacingAndGlyphs" font-weight="bold" >?!</text>
<path d="M556.6 451.7h3.2l2 2v3.8h-5.2z" fill="none" stroke="#000" stroke-width="1" />
<text x="556.00" y="469.60" font-size="8.4" fill="#000" font-family="Liberation Sans, sans-serif" textLength="6.60" lengthAdjust="spacingAndGlyphs" font-weight="bold" >?!</text>
<line x1="505.10" y1="460.40" x2="514.50" y2="460.40" stroke="#000" stroke-width="2.9" />
<circle cx="516.90" cy="460.40" r="2.7" fill="#fff" stroke="#000" stroke-width="1.6"/>
<rect x="518.30" y="459.00" width="2.60" height="2.80" fill="#ffffd4" />
<text x="528.00" y="464.40" font-size="15" fill="#222" font-family="Liberation Sans, sans-serif" textLength="18.80" lengthAdjust="spacingAndGlyphs" >Ctl</text>
<rect x="488.15" y="471.65" width="78.80" height="22.10" fill="#fff" stroke="#6b6b55" stroke-width="1.3" />
<path d="M561.60 479.50 L565.60 483.00 L561.60 486.50Z" fill="#000" />
<text x="490.00" y="488.50" font-size="15.5" fill="#ff00ff" font-family="Liberation Sans, sans-serif" textLength="69.50" lengthAdjust="spacingAndGlyphs" >Label.Text</text>
<rect x="488.15" y="494.05" width="78.80" height="21.70" fill="#fff" stroke="#6b6b55" stroke-width="1.3" />
<path d="M561.60 501.70 L565.60 505.20 L561.60 508.70Z" fill="#000" />
<text x="500.00" y="510.50" font-size="15.5" fill="#0000ff" font-family="Liberation Sans, sans-serif" textLength="49.50" lengthAdjust="spacingAndGlyphs" >ClassID</text>
<rect x="591.85" y="354.95" width="40.20" height="40.10" fill="#ffffd4" stroke="#7a7a66" stroke-width="1.3" />
<rect x="594.20" y="361.00" width="31.80" height="5.60" fill="none" stroke="#3a3a3a" stroke-width="1.1" />
<line x1="599.50" y1="361.00" x2="599.50" y2="366.60" stroke="#3a3a3a" stroke-width="1" />
<line x1="604.80" y1="361.00" x2="604.80" y2="366.60" stroke="#3a3a3a" stroke-width="1" />
<line x1="610.10" y1="361.00" x2="610.10" y2="366.60" stroke="#3a3a3a" stroke-width="1" />
<line x1="615.40" y1="361.00" x2="615.40" y2="366.60" stroke="#3a3a3a" stroke-width="1" />
<line x1="620.70" y1="361.00" x2="620.70" y2="366.60" stroke="#3a3a3a" stroke-width="1" />
<circle cx="608.6" cy="368" r="3.6" fill="#ffffd4" stroke="#3a3a3a" stroke-width="1.2"/>
<line x1="608.20" y1="371.60" x2="607.00" y2="381.00" stroke="#3a3a3a" stroke-width="2.2" />
<rect x="595.40" y="374.40" width="5.60" height="5.60" fill="none" stroke="#3a3a3a" stroke-width="1.1" />
<path d="M596.4 375.4l3.6 3.6M600 375.4l-3.6 3.6" fill="none" stroke="#3a3a3a" stroke-width="0.8" />
<path d="M617.6 368.5v6.5q0 3.4 4 3.4h2" fill="none" stroke="#3a3a3a" stroke-width="1" stroke-dasharray="1.3 1.3"/>
<path d="M621.8 376.2l2.6 2.2l-2.6 2.2" fill="none" stroke="#3a3a3a" stroke-width="1.1" />
<rect x="625.40" y="376.60" width="3.60" height="3.60" fill="#3a3a3a" />
<rect x="595.20" y="388.60" width="4.60" height="3.20" fill="#3a3a3a" />
<rect x="601.00" y="390.60" width="1.00" height="1.00" fill="#3a3a3a" />
<path d="M605.8 392v-5.5M603.8 388.5l2-2.2l2 2.2M604.4 389.6h3" fill="none" stroke="#3a3a3a" stroke-width="1" />
<polyline points="632.70,375.60 645.00,375.60" fill="none" stroke="#0000ff" stroke-width="1.5" />
<path fill-rule="evenodd" fill="url(#hatch)" d="M644.4 291.5H1290.3V632.8H644.4Z M653.0 300.1V624.1999999999999H1281.7V300.1Z"/>
<rect x="645.10" y="292.20" width="644.50" height="339.90" fill="none" stroke="#000" stroke-width="1.4" />
<path d="M644.4 631.9H1289.3999999999999V291.5" fill="none" stroke="#000" stroke-width="1.8" />
<rect x="652.70" y="299.80" width="629.30" height="324.70" fill="none" stroke="#333" stroke-width="0.6" />
<path fill-rule="evenodd" fill="url(#hatch)" d="M673.2 328.2H1255.2V603.3H673.2Z M681.6 336.59999999999997V594.9H1246.8V336.59999999999997Z"/>
<rect x="673.90" y="328.90" width="580.60" height="273.70" fill="none" stroke="#000" stroke-width="1.4" />
<path d="M673.2 602.4H1254.3V328.2" fill="none" stroke="#000" stroke-width="1.8" />
<rect x="681.30" y="336.30" width="565.80" height="258.90" fill="none" stroke="#333" stroke-width="0.6" />
<path fill-rule="evenodd" fill="url(#hatch)" d="M937.4 362H1221.3V573.2H937.4Z M945.6 370.2V565.0H1213.1V370.2Z"/>
<rect x="938.10" y="362.70" width="282.50" height="209.80" fill="none" stroke="#000" stroke-width="1.4" />
<path d="M937.4 572.3000000000001H1220.3999999999999V362" fill="none" stroke="#000" stroke-width="1.8" />
<rect x="945.30" y="369.90" width="268.10" height="195.40" fill="none" stroke="#333" stroke-width="0.6" />
<rect x="918.65" y="292.65" width="95.90" height="20.50" fill="#fff" stroke="#222" stroke-width="1.3" />
<line x1="928.80" y1="292.00" x2="928.80" y2="313.80" stroke="#222" stroke-width="1.3" />
<line x1="1004.40" y1="292.00" x2="1004.40" y2="313.80" stroke="#222" stroke-width="1.3" />
<path d="M920.50 302.90 L927.30 298.90 L927.30 306.90Z" fill="#000" />
<path d="M1012.70 302.90 L1005.90 298.90 L1005.90 306.90Z" fill="#000" />
<path d="M991.90 300.40 L1000.90 300.40 L996.40 305.40Z" fill="#000" />
<text x="934.40" y="308.50" font-size="15" fill="#000" font-family="Liberation Sans, sans-serif" textLength="48.50" lengthAdjust="spacingAndGlyphs" >Default</text>
<rect x="915.85" y="329.15" width="96.10" height="20.40" fill="#fff" stroke="#222" stroke-width="1.3" />
<line x1="926.00" y1="328.50" x2="926.00" y2="350.20" stroke="#222" stroke-width="1.3" />
<line x1="1001.80" y1="328.50" x2="1001.80" y2="350.20" stroke="#222" stroke-width="1.3" />
<path d="M917.70 339.35 L924.50 335.35 L924.50 343.35Z" fill="#000" />
<path d="M1010.10 339.35 L1003.30 335.35 L1003.30 343.35Z" fill="#000" />
<path d="M989.10 336.85 L998.10 336.85 L993.60 341.85Z" fill="#000" />
<text x="931.00" y="344.90" font-size="15" fill="#000" font-family="Liberation Sans, sans-serif" textLength="14.50" lengthAdjust="spacingAndGlyphs" >18</text>
<rect x="1030.85" y="362.95" width="96.90" height="20.40" fill="#fff" stroke="#222" stroke-width="1.3" />
<line x1="1041.00" y1="362.30" x2="1041.00" y2="384.00" stroke="#222" stroke-width="1.3" />
<line x1="1117.60" y1="362.30" x2="1117.60" y2="384.00" stroke="#222" stroke-width="1.3" />
<path d="M1032.70 373.15 L1039.50 369.15 L1039.50 377.15Z" fill="#000" />
<path d="M1125.90 373.15 L1119.10 369.15 L1119.10 377.15Z" fill="#000" />
<path d="M1106.10 370.65 L1115.10 370.65 L1110.60 375.65Z" fill="#000" />
<text x="1045.60" y="378.70" font-size="15" fill="#000" font-family="Liberation Sans, sans-serif" textLength="42.00" lengthAdjust="spacingAndGlyphs" >"%.0f"</text>
<rect x="645.25" y="368.25" width="8.90" height="13.70" fill="#ffffd4" stroke="#0000ff" stroke-width="1.3" />
<text x="649.70" y="379.60" font-size="12.5" fill="#0000ff" font-family="Liberation Sans, sans-serif" text-anchor="middle" >?</text>
<rect x="645.50" y="406.10" width="9.80" height="9.80" fill="#ff00ff" stroke="#4a4230" stroke-width="1" />
<rect x="645.50" y="448.90" width="9.80" height="10.40" fill="#008080" stroke="#4a4230" stroke-width="1" />
<rect x="645.50" y="459.90" width="9.80" height="10.40" fill="#808000" stroke="#4a4230" stroke-width="1" />
<rect x="645.50" y="499.90" width="9.80" height="9.60" fill="#0000ff" stroke="#4a4230" stroke-width="1" />
<polyline points="654.80,375.60 674.00,375.60" fill="none" stroke="#0000ff" stroke-width="1.5" />
<polyline points="655.80,410.70 674.00,410.70" fill="none" stroke="#ff00ff" stroke-width="4.3" />
<polyline points="655.80,410.70 674.00,410.70" fill="none" stroke="#fff" stroke-width="2.0" stroke-dasharray="2.7 2.45" stroke-dashoffset="-1.2"/>
<polyline points="655.80,453.60 674.00,453.60" fill="none" stroke="#3a9a9a" stroke-width="1.5" />
<polyline points="655.80,465.40 674.00,465.40" fill="none" stroke="#808000" stroke-width="4.0" stroke-linejoin="miter"/>
<polyline points="655.80,465.40 674.00,465.40" fill="none" stroke="#e8e800" stroke-width="2.0" />
<polyline points="655.80,465.40 674.00,465.40" fill="none" stroke="#000" stroke-width="2.0" stroke-dasharray="2.4 2.8"/>
<polyline points="655.80,504.60 673.60,504.60" fill="none" stroke="#0000ff" stroke-width="1.5" />
<rect x="674.30" y="370.90" width="9.80" height="9.80" fill="#0000ff" stroke="#4a4230" stroke-width="1" />
<rect x="674.30" y="406.10" width="9.80" height="9.80" fill="#ff00ff" stroke="#4a4230" stroke-width="1" />
<rect x="674.30" y="448.90" width="9.80" height="10.40" fill="#008080" stroke="#4a4230" stroke-width="1" />
<rect x="674.30" y="459.90" width="9.80" height="10.40" fill="#808000" stroke="#4a4230" stroke-width="1" />
<rect x="674.05" y="497.45" width="9.10" height="13.50" fill="#ffffd4" stroke="#0000ff" stroke-width="1.3" />
<text x="678.60" y="508.60" font-size="12.5" fill="#0000ff" font-family="Liberation Sans, sans-serif" text-anchor="middle" >?</text>
<polyline points="684.60,375.80 697.00,375.80 697.00,427.80 708.60,427.80" fill="none" stroke="#0000ff" stroke-width="1.5" />
<polyline points="684.60,410.80 693.60,410.80" fill="none" stroke="#ff00ff" stroke-width="4.3" />
<polyline points="684.60,410.80 693.60,410.80" fill="none" stroke="#fff" stroke-width="2.0" stroke-dasharray="2.7 2.45" stroke-dashoffset="-1.2"/>
<polyline points="700.60,410.80 708.60,410.80" fill="none" stroke="#ff00ff" stroke-width="4.3" />
<polyline points="700.60,410.80 708.60,410.80" fill="none" stroke="#fff" stroke-width="2.0" stroke-dasharray="2.7 2.45" stroke-dashoffset="-1.2"/>
<path d="M749.80 427.60q2.62 2.20 5.24 0.00q2.62 2.20 5.24 0.00q2.62 2.20 5.24 0.00q2.62 2.20 5.24 0.00q2.62 2.20 5.24 0.00q2.62 2.20 5.24 0.00q2.62 2.20 5.24 0.00q2.62 2.20 5.24 0.00q2.62 2.20 5.24 0.00q2.62 2.20 5.24 0.00q2.62 2.20 5.24 0.00q2.62 2.20 5.24 0.00q2.62 2.20 5.24 0.00q2.62 2.20 5.24 0.00q2.62 2.20 5.24 0.00q2.62 2.20 5.24 0.00q2.62 2.20 5.24 0.00q2.62 2.20 5.24 0.00q2.62 2.20 5.24 0.00q2.62 2.20 5.24 0.00q2.62 2.20 5.24 0.00q2.62 2.20 5.24 0.00q2.62 2.20 5.24 0.00q2.62 2.20 5.24 0.00q2.62 2.20 5.24 0.00q2.62 2.20 5.24 0.00q2.62 2.20 5.24 0.00q2.62 2.20 5.24 0.00q2.62 2.20 5.24 0.00q2.62 2.20 5.24 0.00q2.62 2.20 5.24 0.00q2.62 2.20 5.24 0.00q2.62 2.20 5.24 0.00q2.62 2.20 5.24 0.00q2.62 2.20 5.24 0.00q2.62 2.20 5.24 0.00" fill="none" stroke="#ff00ff" stroke-width="1.5" />
<polyline points="684.60,453.70 709.40,453.70 709.40,489.00 751.40,489.00" fill="none" stroke="#3a9a9a" stroke-width="1.5" />
<polyline points="684.60,465.30 697.20,465.30 697.20,499.50 751.40,499.50" fill="none" stroke="#808000" stroke-width="4.0" stroke-linejoin="miter"/>
<polyline points="684.60,465.30 697.20,465.30 697.20,499.50 751.40,499.50" fill="none" stroke="#e8e800" stroke-width="2.0" />
<polyline points="684.60,465.30 697.20,465.30 697.20,499.50 751.40,499.50" fill="none" stroke="#000" stroke-width="2.0" stroke-dasharray="2.4 2.8"/>
<polyline points="772.80,473.60 772.80,484.00" fill="none" stroke="#008080" stroke-width="1.5" />
<polyline points="792.70,489.00 799.60,489.00 799.60,487.80 807.30,487.80" fill="none" stroke="#3a9a9a" stroke-width="1.5" />
<polyline points="792.70,499.50 807.30,499.50" fill="none" stroke="#808000" stroke-width="4.0" stroke-linejoin="miter"/>
<polyline points="792.70,499.50 807.30,499.50" fill="none" stroke="#e8e800" stroke-width="2.0" />
<polyline points="792.70,499.50 807.30,499.50" fill="none" stroke="#000" stroke-width="2.0" stroke-dasharray="2.4 2.8"/>
<rect x="708.95" y="399.05" width="40.30" height="34.20" fill="#ffffd4" stroke="#7a7a66" stroke-width="1.3" />
<rect x="715.00" y="404.00" width="11.60" height="16.00" fill="none" stroke="#111" stroke-width="1.1" />
<rect x="712.40" y="401.60" width="11.60" height="16.00" fill="#ffffd4" stroke="#111" stroke-width="1.3" />
<line x1="718.20" y1="401.60" x2="718.20" y2="417.60" stroke="#111" stroke-width="1.1" />
<line x1="712.40" y1="406.90" x2="724.00" y2="406.90" stroke="#111" stroke-width="1.1" />
<line x1="712.40" y1="412.30" x2="724.00" y2="412.30" stroke="#111" stroke-width="1.1" />
<rect x="712.40" y="427.60" width="4.80" height="3.00" fill="#111" />
<rect x="718.60" y="430.00" width="1.00" height="1.00" fill="#111" />
<path d="M722.5 431v-5M720.7 427.6l1.8-2l1.8 2M721.2 428.8h2.8" fill="none" stroke="#111" stroke-width="1" />
<rect x="734.60" y="425.20" width="5.60" height="5.60" fill="none" stroke="#111" stroke-width="1.3" />
<rect x="722.60" y="449.20" width="69.00" height="23.60" fill="#ffffd4" stroke="#008080" stroke-width="2.4" />
<rect x="730.90" y="454.00" width="3.00" height="3.00" fill="none" stroke="#008080" stroke-width="1" />
<rect x="726.40" y="459.00" width="3.00" height="3.00" fill="none" stroke="#008080" stroke-width="1" />
<rect x="735.40" y="459.00" width="3.00" height="3.00" fill="none" stroke="#008080" stroke-width="1" />
<line x1="730.90" y1="457.00" x2="729.40" y2="459.00" stroke="#008080" stroke-width="1" />
<line x1="733.90" y1="457.00" x2="735.90" y2="459.00" stroke="#008080" stroke-width="1" />
<rect x="733.40" y="464.00" width="3.00" height="3.00" fill="#008080" />
<circle cx="739.6999999999999" cy="465.8" r="1.6" fill="none" stroke="#008080" stroke-width="1"/>
<line x1="736.90" y1="462.00" x2="734.90" y2="464.00" stroke="#008080" stroke-width="1" />
<line x1="736.90" y1="462.00" x2="739.40" y2="464.00" stroke="#008080" stroke-width="1" />
<text x="745.90" y="467.30" font-size="16" fill="#008080" font-family="Liberation Sans, sans-serif" textLength="43.40" lengthAdjust="spacingAndGlyphs" >Digital</text>
<rect x="752.05" y="484.35" width="40.10" height="18.70" fill="#ffffd4" stroke="#77775f" stroke-width="1.3" />
<line x1="762.16" y1="489.70" x2="756.78" y2="498.10" stroke="#3a3a3a" stroke-width="1" />
<line x1="762.16" y1="489.70" x2="767.96" y2="498.10" stroke="#3a3a3a" stroke-width="1" />
<line x1="782.04" y1="489.70" x2="777.07" y2="498.10" stroke="#3a3a3a" stroke-width="1" />
<line x1="782.04" y1="489.70" x2="787.83" y2="498.10" stroke="#3a3a3a" stroke-width="1" />
<line x1="766.30" y1="489.30" x2="775.41" y2="495.70" stroke="#3a3a3a" stroke-width="1" />
<path d="M775.41 495.70 L772.10 495.30 L775.41 492.70" fill="none" stroke="#3a3a3a" stroke-width="1" />
<circle cx="762.16" cy="489.70" r="2.9" fill="#3a3a3a" stroke="#3a3a3a" stroke-width="1"/>
<circle cx="756.78" cy="498.10" r="2.6" fill="#ffffd4" stroke="#3a3a3a" stroke-width="1"/>
<circle cx="767.96" cy="498.10" r="2.6" fill="#ffffd4" stroke="#3a3a3a" stroke-width="1"/>
<circle cx="782.04" cy="489.70" r="2.9" fill="#ffffd4" stroke="#3a3a3a" stroke-width="1"/>
<circle cx="777.07" cy="498.10" r="2.9" fill="#3a3a3a" stroke="#3a3a3a" stroke-width="1"/>
<circle cx="787.83" cy="498.10" r="2.6" fill="#ffffd4" stroke="#3a3a3a" stroke-width="1"/>
<rect x="807.90" y="483.00" width="113.10" height="21.60" fill="#ffffd4" stroke="#6b6b55" stroke-width="1.2" />
<path d="M811.8 485.9h3.2l2 2v3.8h-5.2z" fill="none" stroke="#000" stroke-width="1" />
<text x="811.20" y="502.80" font-size="8.4" fill="#000" font-family="Liberation Sans, sans-serif" textLength="6.60" lengthAdjust="spacingAndGlyphs" font-weight="bold" >?!</text>
<path d="M910.6 485.9h3.2l2 2v3.8h-5.2z" fill="none" stroke="#000" stroke-width="1" />
<text x="910.00" y="502.80" font-size="8.4" fill="#000" font-family="Liberation Sans, sans-serif" textLength="6.60" lengthAdjust="spacingAndGlyphs" font-weight="bold" >?!</text>
<line x1="824.90" y1="494.10" x2="834.30" y2="494.10" stroke="#000" stroke-width="2.9" />
<circle cx="836.70" cy="494.10" r="2.7" fill="#fff" stroke="#000" stroke-width="1.6"/>
<rect x="838.10" y="492.70" width="2.60" height="2.80" fill="#ffffd4" />
<text x="844.50" y="497.60" font-size="15" fill="#222" font-family="Liberation Sans, sans-serif" textLength="58.00" lengthAdjust="spacingAndGlyphs" >DigNum</text>
<rect x="807.95" y="504.85" width="113.00" height="22.80" fill="#fff" stroke="#6b6b55" stroke-width="1.3" />
<path d="M915.60 513.05 L919.60 516.55 L915.60 520.05Z" fill="#000" />
<text x="816.50" y="522.40" font-size="15.5" fill="#ff00ff" font-family="Liberation Sans, sans-serif" textLength="90.00" lengthAdjust="spacingAndGlyphs" >FormatString</text>
<polyline points="921.60,487.80 938.40,487.80" fill="none" stroke="#3a9a9a" stroke-width="1.5" />
<polyline points="921.60,499.50 938.40,499.50" fill="none" stroke="#808000" stroke-width="4.0" stroke-linejoin="miter"/>
<polyline points="921.60,499.50 938.40,499.50" fill="none" stroke="#e8e800" stroke-width="2.0" />
<polyline points="921.60,499.50 938.40,499.50" fill="none" stroke="#000" stroke-width="2.0" stroke-dasharray="2.4 2.8"/>
<path d="M921.60 515.60q2.73 2.20 5.47 0.00q2.73 2.20 5.47 0.00q2.73 2.20 5.47 0.00" fill="none" stroke="#ff00ff" stroke-width="1.5" />
<rect x="938.90" y="422.70" width="9.80" height="10.00" fill="#ff00ff" stroke="#4a4230" stroke-width="1" />
<rect x="938.90" y="482.90" width="9.80" height="10.60" fill="#008080" stroke="#4a4230" stroke-width="1" />
<rect x="938.90" y="494.10" width="9.80" height="10.20" fill="#808000" stroke="#4a4230" stroke-width="1" />
<rect x="938.45" y="508.85" width="8.90" height="13.70" fill="#ffffd4" stroke="#ff00ff" stroke-width="1.3" />
<text x="942.90" y="520.20" font-size="12.5" fill="#ff00ff" font-family="Liberation Sans, sans-serif" text-anchor="middle" >?</text>
<path d="M949.20 427.70q2.82 2.20 5.63 0.00q2.82 2.20 5.63 0.00q2.82 2.20 5.63 0.00" fill="none" stroke="#ff00ff" stroke-width="1.5" />
<polyline points="949.20,487.80 1082.50,487.80" fill="none" stroke="#3a9a9a" stroke-width="1.5" />
<polyline points="949.20,499.50 1082.50,499.50" fill="none" stroke="#808000" stroke-width="4.0" stroke-linejoin="miter"/>
<polyline points="949.20,499.50 1082.50,499.50" fill="none" stroke="#e8e800" stroke-width="2.0" />
<polyline points="949.20,499.50 1082.50,499.50" fill="none" stroke="#000" stroke-width="2.0" stroke-dasharray="2.4 2.8"/>
<rect x="966.75" y="421.65" width="40.10" height="40.00" fill="#ffffd4" stroke="#7a7a66" stroke-width="1.3" />
<rect x="967.30" y="423.70" width="32.40" height="10.60" fill="#d8d8c4" stroke="#55554a" stroke-width="1" />
<rect x="967.60" y="424.00" width="4.60" height="10.00" fill="url(#hatch2)" />
<rect x="995.00" y="424.00" width="4.60" height="10.00" fill="url(#hatch2)" />
<text x="983.40" y="432.80" font-size="9.5" fill="#666" font-family="Liberation Sans, sans-serif" textLength="20.00" lengthAdjust="spacingAndGlyphs" text-anchor="middle" >999</text>
<rect x="969.00" y="439.20" width="3.20" height="3.40" fill="#3a3a3a" />
<path d="M973.4 441.4h2.4v-3.6M974.2 439.2l1.6-1.8l1.6 1.8" fill="none" stroke="#3a3a3a" stroke-width="1" />
<rect x="1000.20" y="439.20" width="3.40" height="3.40" fill="#3a3a3a" />
<path d="M998.4 441.4h-2v-1.6l-2.6-2M993.8 439.4v-1.8h1.8" fill="none" stroke="#3a3a3a" stroke-width="1" />
<rect x="969.00" y="450.60" width="6.60" height="7.40" fill="none" stroke="#3a3a3a" stroke-width="1.1" rx="1.6"/>
<rect x="971.40" y="453.40" width="1.80" height="1.80" fill="#3a3a3a" />
<line x1="980.00" y1="454.40" x2="986.00" y2="454.40" stroke="#3a3a3a" stroke-width="1" stroke-dasharray="1.2 1.2"/>
<line x1="986.00" y1="454.40" x2="991.60" y2="454.40" stroke="#3a3a3a" stroke-width="1.3" />
<path d="M991.00 452.00 L994.40 454.40 L991.00 456.80Z" fill="#3a3a3a" />
<path d="M998.6 451v7M1002 451v7M996.8 453h7M996.8 456h7" fill="none" stroke="#3a3a3a" stroke-width="1.2" />
<polyline points="1007.50,452.60 1027.60,452.60" fill="none" stroke="#0000ff" stroke-width="1.5" />
<path d="M1026.4 445.8H1053.5Q1059 446 1059 452.6Q1059 459 1053.5 459.4H1026.4L1029.4 456V449.2Z" fill="#ffffd4" stroke="#77775f" stroke-width="1.3" />
<rect x="1039.40" y="448.00" width="8.20" height="9.00" fill="none" stroke="#3a3a3a" stroke-width="1.2" />
<path d="M1039.4 450.4h-2.4v4.2h2.4M1047.6 450.4h2.4v4.2h-2.4" fill="none" stroke="#77775f" stroke-width="1" />
<polyline points="1059.00,452.50 1070.80,452.50 1070.80,484.80" fill="none" stroke="#a020a0" stroke-width="4.6" />
<polyline points="1059.00,452.50 1070.80,452.50 1070.80,484.80" fill="none" stroke="#fff" stroke-width="1.4" stroke-dasharray="1.5 1.5"/>
<polyline points="1070.80,491.00 1070.80,496.00" fill="none" stroke="#a020a0" stroke-width="4.6" />
<polyline points="1070.80,491.00 1070.80,496.00" fill="none" stroke="#fff" stroke-width="1.4" stroke-dasharray="1.5 1.5"/>
<polyline points="1070.80,503.40 1070.80,516.20 1082.50,516.20" fill="none" stroke="#a020a0" stroke-width="4.6" />
<polyline points="1070.80,503.40 1070.80,516.20 1082.50,516.20" fill="none" stroke="#fff" stroke-width="1.4" stroke-dasharray="1.5 1.5"/>
<rect x="1083.10" y="483.00" width="112.30" height="21.60" fill="#ffffd4" stroke="#6b6b55" stroke-width="1.2" />
<path d="M1087.0 485.9h3.2l2 2v3.8h-5.2z" fill="none" stroke="#000" stroke-width="1" />
<text x="1086.40" y="502.80" font-size="8.4" fill="#000" font-family="Liberation Sans, sans-serif" textLength="6.60" lengthAdjust="spacingAndGlyphs" font-weight="bold" >?!</text>
<path d="M1185 485.9h3.2l2 2v3.8h-5.2z" fill="none" stroke="#000" stroke-width="1" />
<text x="1184.40" y="502.80" font-size="8.4" fill="#000" font-family="Liberation Sans, sans-serif" textLength="6.60" lengthAdjust="spacingAndGlyphs" font-weight="bold" >?!</text>
<line x1="1100.10" y1="494.10" x2="1109.50" y2="494.10" stroke="#000" stroke-width="2.9" />
<circle cx="1111.90" cy="494.10" r="2.7" fill="#fff" stroke="#000" stroke-width="1.6"/>
<rect x="1113.30" y="492.70" width="2.60" height="2.80" fill="#ffffd4" />
<text x="1119.60" y="497.60" font-size="15" fill="#222" font-family="Liberation Sans, sans-serif" textLength="58.00" lengthAdjust="spacingAndGlyphs" >DigNum</text>
<rect x="1083.15" y="504.85" width="112.20" height="22.80" fill="#fff" stroke="#6b6b55" stroke-width="1.3" />
<path d="M1084.00 513.05 L1088.00 516.55 L1084.00 520.05Z" fill="#000" />
<text x="1121.00" y="522.40" font-size="15.5" fill="#8020a0" font-family="Liberation Sans, sans-serif" textLength="37.50" lengthAdjust="spacingAndGlyphs" >Value</text>
<polyline points="1196.00,499.50 1490.80,499.50" fill="none" stroke="#808000" stroke-width="4.0" stroke-linejoin="miter"/>
<polyline points="1196.00,499.50 1490.80,499.50" fill="none" stroke="#e8e800" stroke-width="2.0" />
<polyline points="1196.00,499.50 1490.80,499.50" fill="none" stroke="#000" stroke-width="2.0" stroke-dasharray="2.4 2.8"/>
<rect x="1210.90" y="494.70" width="9.80" height="9.60" fill="#808000" stroke="#4a4230" stroke-width="1" />
<rect x="1244.90" y="494.70" width="9.80" height="9.60" fill="#808000" stroke="#4a4230" stroke-width="1" />
<rect x="1279.90" y="494.70" width="9.80" height="9.60" fill="#808000" stroke="#4a4230" stroke-width="1" />
<rect x="1314.90" y="494.70" width="9.60" height="9.60" fill="#808000" stroke="#4a4230" stroke-width="1" />
<rect x="1343.05" y="420.05" width="131.10" height="112.90" fill="#e6e6e6" stroke="#3a3a3a" stroke-width="1.3" />
<rect x="1349.75" y="432.55" width="117.90" height="88.30" fill="#fff" stroke="#3a3a3a" stroke-width="1.5" />
<rect x="1354.60" y="422.80" width="6.60" height="6.60" fill="#fff" stroke="#222" stroke-width="1.3" />
<rect x="1354.60" y="524.40" width="6.60" height="6.60" fill="#fff" stroke="#222" stroke-width="1.3" />
<rect x="1370.17" y="422.80" width="6.60" height="6.60" fill="#fff" stroke="#222" stroke-width="1.3" />
<rect x="1370.17" y="524.40" width="6.60" height="6.60" fill="#fff" stroke="#222" stroke-width="1.3" />
<rect x="1385.74" y="422.80" width="6.60" height="6.60" fill="#fff" stroke="#222" stroke-width="1.3" />
<rect x="1385.74" y="524.40" width="6.60" height="6.60" fill="#fff" stroke="#222" stroke-width="1.3" />
<rect x="1401.31" y="422.80" width="6.60" height="6.60" fill="#fff" stroke="#222" stroke-width="1.3" />
<rect x="1401.31" y="524.40" width="6.60" height="6.60" fill="#fff" stroke="#222" stroke-width="1.3" />
<rect x="1416.88" y="422.80" width="6.60" height="6.60" fill="#fff" stroke="#222" stroke-width="1.3" />
<rect x="1416.88" y="524.40" width="6.60" height="6.60" fill="#fff" stroke="#222" stroke-width="1.3" />
<rect x="1432.45" y="422.80" width="6.60" height="6.60" fill="#fff" stroke="#222" stroke-width="1.3" />
<rect x="1432.45" y="524.40" width="6.60" height="6.60" fill="#fff" stroke="#222" stroke-width="1.3" />
<rect x="1448.02" y="422.80" width="6.60" height="6.60" fill="#fff" stroke="#222" stroke-width="1.3" />
<rect x="1448.02" y="524.40" width="6.60" height="6.60" fill="#fff" stroke="#222" stroke-width="1.3" />
<rect x="1463.59" y="422.80" width="6.60" height="6.60" fill="#fff" stroke="#222" stroke-width="1.3" />
<rect x="1463.59" y="524.40" width="6.60" height="6.60" fill="#fff" stroke="#222" stroke-width="1.3" />
<path d="M1343.4 421q1.6 1.3 0 2.6t0 2.6q1.6 1.3 0 2.6t0 2.6q1.6 1.3 0 2.6t0 2.6q1.6 1.3 0 2.6t0 2.6q1.6 1.3 0 2.6t0 2.6q1.6 1.3 0 2.6t0 2.6q1.6 1.3 0 2.6t0 2.6q1.6 1.3 0 2.6t0 2.6q1.6 1.3 0 2.6t0 2.6q1.6 1.3 0 2.6t0 2.6q1.6 1.3 0 2.6t0 2.6q1.6 1.3 0 2.6t0 2.6q1.6 1.3 0 2.6t0 2.6q1.6 1.3 0 2.6t0 2.6q1.6 1.3 0 2.6t0 2.6q1.6 1.3 0 2.6t0 2.6q1.6 1.3 0 2.6t0 2.6q1.6 1.3 0 2.6t0 2.6q1.6 1.3 0 2.6t0 2.6q1.6 1.3 0 2.6t0 2.6q1.6 1.3 0 2.6t0 2.6" fill="none" stroke="#fff" stroke-width="1.2" />
<path d="M1473.8 421q-1.6 1.3 0 2.6t0 2.6q-1.6 1.3 0 2.6t0 2.6q-1.6 1.3 0 2.6t0 2.6q-1.6 1.3 0 2.6t0 2.6q-1.6 1.3 0 2.6t0 2.6q-1.6 1.3 0 2.6t0 2.6q-1.6 1.3 0 2.6t0 2.6q-1.6 1.3 0 2.6t0 2.6q-1.6 1.3 0 2.6t0 2.6q-1.6 1.3 0 2.6t0 2.6q-1.6 1.3 0 2.6t0 2.6q-1.6 1.3 0 2.6t0 2.6q-1.6 1.3 0 2.6t0 2.6q-1.6 1.3 0 2.6t0 2.6q-1.6 1.3 0 2.6t0 2.6q-1.6 1.3 0 2.6t0 2.6q-1.6 1.3 0 2.6t0 2.6q-1.6 1.3 0 2.6t0 2.6q-1.6 1.3 0 2.6t0 2.6q-1.6 1.3 0 2.6t0 2.6q-1.6 1.3 0 2.6t0 2.6" fill="none" stroke="#fff" stroke-width="1.2" />
<polyline points="1349.00,499.50 1468.40,499.50" fill="none" stroke="#808000" stroke-width="4.0" stroke-linejoin="miter"/>
<polyline points="1349.00,499.50 1468.40,499.50" fill="none" stroke="#e8e800" stroke-width="2.0" />
<polyline points="1349.00,499.50 1468.40,499.50" fill="none" stroke="#000" stroke-width="2.0" stroke-dasharray="2.4 2.8"/>
<rect x="1343.50" y="494.70" width="9.80" height="9.60" fill="#808000" stroke="#4a4230" stroke-width="1" />
<rect x="1463.90" y="494.70" width="9.80" height="9.60" fill="#808000" stroke="#4a4230" stroke-width="1" />
<text x="1367.60" y="459.60" font-size="15" fill="#000" font-family="Liberation Sans, sans-serif" textLength="86.00" lengthAdjust="spacingAndGlyphs" >module data</text>
<rect x="1366.45" y="465.45" width="40.30" height="19.50" fill="#fff" stroke="#ff00ff" stroke-width="1.3" />
<rect x="1369.00" y="468.00" width="35.20" height="14.40" fill="#fff" stroke="#ff00ff" stroke-width="1.2" />
<rect x="1369.00" y="468.00" width="9.00" height="14.40" fill="#ffb8ff" />
<path d="M1365.80 464.80 L1376.40 464.80 L1365.80 475.40Z" fill="#000" />
<path d="M1370.00 471.00 L1374.60 475.20 L1370.00 479.40Z" fill="#000" />
<rect x="1380.00" y="471.60" width="5.50" height="2.40" fill="#fff" stroke="#ff00ff" stroke-width="1" />
<rect x="1388.50" y="471.00" width="3.50" height="1.30" fill="#ff00ff" />
<rect x="1394.50" y="470.60" width="1.60" height="3.20" fill="#ff00ff" />
<rect x="1378.30" y="476.50" width="3.60" height="2.40" fill="#ff00ff" />
<rect x="1386.00" y="475.90" width="5.00" height="3.20" fill="#ff00ff" />
<rect x="1394.50" y="476.10" width="3.00" height="3.00" fill="#fff" stroke="#ff00ff" stroke-width="1" />
<text x="1492.60" y="482.40" font-size="15" fill="#000" font-family="Liberation Sans, sans-serif" textLength="59.00" lengthAdjust="spacingAndGlyphs" >error out</text>
<rect x="1491.50" y="489.70" width="39.80" height="18.40" fill="#fff" stroke="#8c8c3c" stroke-width="1.4" />
<rect x="1494.00" y="492.20" width="34.80" height="13.40" fill="#fff" stroke="#8c8c3c" stroke-width="1.2" />
<rect x="1494.00" y="492.20" width="9.00" height="13.40" fill="#d4d4a8" />
<path d="M1494.30 494.60 L1498.80 498.90 L1494.30 503.20Z" fill="#000" />
<rect x="1504.80" y="495.30" width="5.50" height="2.40" fill="#fff" stroke="#8c8c3c" stroke-width="1" />
<rect x="1513.30" y="494.70" width="3.50" height="1.30" fill="#8c8c3c" />
<rect x="1519.30" y="494.30" width="1.60" height="3.20" fill="#8c8c3c" />
<rect x="1503.10" y="500.20" width="3.60" height="2.40" fill="#8c8c3c" />
<rect x="1510.80" y="499.60" width="5.00" height="3.20" fill="#8c8c3c" />
<rect x="1519.30" y="499.80" width="3.00" height="3.00" fill="#fff" stroke="#8c8c3c" stroke-width="1" />
<line x1="46.80" y1="676.20" x2="1619.00" y2="676.20" stroke="#8a8a8a" stroke-width="1.2" />
<rect x="46.00" y="676.60" width="1573.00" height="43.50" fill="#fff" />
<rect x="62.00" y="687.10" width="21.00" height="21.00" fill="#58595b" />
<path d="M65.00 690.30 L80.50 697.60 L65.00 704.90Z" fill="#ffd200" />
<path d="M69.2 697.6h4M71.2 695.6v4" fill="none" stroke="#9a8a30" stroke-width="1" />
<text x="88.00" y="704.20" font-size="15.3" fill="#000" font-family="Liberation Sans, sans-serif" textLength="188.00" lengthAdjust="spacingAndGlyphs" >User_manager_library.lvlib:</text>
<text x="276.00" y="704.20" font-size="15.3" fill="#000" font-family="Liberation Sans, sans-serif" textLength="153.80" lengthAdjust="spacingAndGlyphs" >User_manager.lvclass:</text>
<text x="429.80" y="704.20" font-size="15.3" fill="#000" font-family="Liberation Sans, sans-serif" textLength="256.50" lengthAdjust="spacingAndGlyphs" >User_manager_get_all_cluster_refs.vi </text>
<text x="686.30" y="704.20" font-size="15.3" fill="#000" font-family="Liberation Sans, sans-serif" textLength="127.70" lengthAdjust="spacingAndGlyphs" >Block Diagram on </text>
<text x="814.00" y="704.20" font-size="15.3" fill="#000" font-family="Liberation Sans, sans-serif" textLength="245.00" lengthAdjust="spacingAndGlyphs" >User_manager.lvproj/My Computer</text>
<line x1="1469.00" y1="698.10" x2="1481.00" y2="698.10" stroke="#000" stroke-width="1.2" />
<rect x="1529.50" y="693.00" width="11.20" height="11.20" fill="none" stroke="#000" stroke-width="1.2" />
<path d="M1590.5 692.6l11.5 11.5M1602 692.6l-11.5 11.5" fill="none" stroke="#000" stroke-width="1.2" />
<rect x="46.00" y="719.60" width="1573.00" height="59.50" fill="#f0f0f0" />
<line x1="46.00" y1="745.50" x2="1584.00" y2="745.50" stroke="#9a9a9a" stroke-width="1.4" />
<line x1="46.00" y1="778.90" x2="1619.00" y2="778.90" stroke="#7a7a7a" stroke-width="1.5" />
<line x1="46.00" y1="777.50" x2="1619.00" y2="777.50" stroke="#bdbdbd" stroke-width="1" />
<text x="57.00" y="736.20" font-size="15" fill="#000" font-family="Liberation Sans, sans-serif" textLength="23.50" lengthAdjust="spacingAndGlyphs" >File</text>
<text x="99.00" y="736.20" font-size="15" fill="#000" font-family="Liberation Sans, sans-serif" textLength="26.00" lengthAdjust="spacingAndGlyphs" >Edit</text>
<text x="143.00" y="736.20" font-size="15" fill="#000" font-family="Liberation Sans, sans-serif" textLength="32.60" lengthAdjust="spacingAndGlyphs" >View</text>
<text x="194.20" y="736.20" font-size="15" fill="#000" font-family="Liberation Sans, sans-serif" textLength="47.40" lengthAdjust="spacingAndGlyphs" >Project</text>
<text x="260.40" y="736.20" font-size="15" fill="#000" font-family="Liberation Sans, sans-serif" textLength="54.30" lengthAdjust="spacingAndGlyphs" >Operate</text>
<text x="333.80" y="736.20" font-size="15" fill="#000" font-family="Liberation Sans, sans-serif" textLength="35.80" lengthAdjust="spacingAndGlyphs" >Tools</text>
<text x="388.00" y="736.20" font-size="15" fill="#000" font-family="Liberation Sans, sans-serif" textLength="57.20" lengthAdjust="spacingAndGlyphs" >Window</text>
<text x="463.80" y="736.20" font-size="15" fill="#000" font-family="Liberation Sans, sans-serif" textLength="32.00" lengthAdjust="spacingAndGlyphs" >Help</text>
<path d="M121.00 759.00 L127.50 759.00 L127.50 754.60 L135.50 762.60 L127.50 770.60 L127.50 766.20 L121.00 766.20Z" fill="#fff" stroke="#000" stroke-width="1.7" stroke-linejoin="miter"/>
<path d="M150 761.6v-4.5h8.5v-3l5 4.6l-5 4.6v-3h-5v1.5z" fill="#fff" stroke="#000" stroke-width="1.3" />
<path d="M164.5 764.1v4.5h-8.5v3l-5-4.6l5-4.6v3h5v-1.5z" fill="#fff" stroke="#000" stroke-width="1.3" />
<path d="M198.05 766.35 L192.75 771.65 L185.25 771.65 L179.95 766.35 L179.95 758.85 L185.25 753.55 L192.75 753.55 L198.05 758.85Z" fill="#f4f4f4" stroke="#a8a8a8" stroke-width="1.2" />
<path d="M196.02 765.51 L191.91 769.62 L186.09 769.62 L181.98 765.51 L181.98 759.69 L186.09 755.58 L191.91 755.58 L196.02 759.69Z" fill="#e0a0a0" />
<rect x="211.00" y="755.60" width="4.00" height="13.60" fill="#000" />
<rect x="218.60" y="755.60" width="4.00" height="13.60" fill="#000" />
<circle cx="251" cy="760.1" r="7" fill="#f6f6f6" stroke="#9a9a9a" stroke-width="1.2"/>
<rect x="248.00" y="766.60" width="6.00" height="5.00" fill="#d8c070" stroke="#8a7a40" stroke-width="0.8" />
<path d="M248.8 766.1l-1.3-5M253.2 766.1l1.3-5" fill="none" stroke="#aaa" stroke-width="0.8" />
<circle cx="279.5" cy="757.6" r="3.6" fill="#fff" stroke="#000" stroke-width="1.3"/>
<line x1="279.50" y1="757.60" x2="279.50" y2="755.60" stroke="#000" stroke-width="1" />
<line x1="279.50" y1="761.40" x2="279.50" y2="768.60" stroke="#000" stroke-width="1.3" />
<rect x="286.00" y="754.60" width="9.00" height="6.00" fill="#c8c8c8" stroke="#777" stroke-width="0.9" />
<line x1="274.00" y1="768.80" x2="286.00" y2="768.80" stroke="#2040ff" stroke-width="1.4" />
<rect x="284.50" y="766.20" width="5.00" height="5.00" fill="#fff" stroke="#000" stroke-width="1.1" />
<path d="M290.50 765.40 L295.50 768.90 L290.50 772.40Z" fill="#10a020" />
<path d="M310 758.1v6.5h7" fill="none" stroke="#000" stroke-width="2.3" />
<path d="M316.00 760.40 L320.60 764.60 L316.00 768.80Z" fill="#000" />
<rect x="322.20" y="762.10" width="6.00" height="6.20" fill="#ffff9a" stroke="#000" stroke-width="1.3" />
<path d="M339.2 763.6v-5.6h11" fill="none" stroke="#000" stroke-width="2.3" />
<path d="M349.50 753.60 L355.50 758.00 L349.50 762.40Z" fill="#000" />
<rect x="342.20" y="762.80" width="7.60" height="7.60" fill="#ffff9a" stroke="#000" stroke-width="1.6" />
<rect x="364.00" y="762.60" width="8.00" height="7.00" fill="#f4f4c0" stroke="#b8b8b8" stroke-width="1.1" />
<path d="M372.5 766.1h6v-7" fill="none" stroke="#b0b0b0" stroke-width="1.8" />
<path d="M374.50 759.10 L378.50 754.10 L382.50 759.10Z" fill="#b0b0b0" />
<rect x="392.60" y="750.60" width="188.80" height="24.40" fill="#f0f0f0" stroke="#6e6e6e" stroke-width="1.2" />
<text x="400.30" y="767.60" font-size="15" fill="#000" font-family="Liberation Sans, sans-serif" textLength="147.50" lengthAdjust="spacingAndGlyphs" >15pt Application Font</text>
<path d="M564.00 760.80 L572.40 760.80 L568.20 765.40Z" fill="#000" />
<rect x="593.60" y="753.60" width="6.20" height="6.20" fill="#58d0f0" stroke="#000" stroke-width="1.2" />
<line x1="596.70" y1="759.80" x2="596.70" y2="767.60" stroke="#000" stroke-width="1.4" />
<path d="M594.20 764.80 L599.20 764.80 L596.70 768.60Z" fill="#000" />
<line x1="593.00" y1="769.50" x2="612.50" y2="769.50" stroke="#000" stroke-width="1" stroke-dasharray="1.2 1.2"/>
<rect x="603.60" y="763.20" width="8.60" height="5.40" fill="#ffff9a" stroke="#000" stroke-width="1.2" />
<path d="M616.00 761.80 L623.40 761.80 L619.70 766.20Z" fill="#000" />
<path d="M639.6 756.4q0.6-1.8 3-1.8h4.6q1.6 0 2-1.6q0.4 1.6 2 1.6h4.6q2.4 0 3 1.8" fill="none" stroke="#000" stroke-width="1.1" />
<rect x="640.60" y="763.00" width="3.40" height="3.40" fill="#000" />
<rect x="646.00" y="760.60" width="5.00" height="8.80" fill="#ffff9a" stroke="#000" stroke-width="1.3" />
<rect x="653.20" y="764.40" width="6.40" height="5.00" fill="#58d0f0" stroke="#000" stroke-width="1.3" />
<path d="M662.40 761.80 L669.80 761.80 L666.10 766.20Z" fill="#000" />
<path d="M696 755.0a7.8 7.8 0 0 0 -1 15l0.5 2.2l5-3.6l-5.6-3l0.4 1.6a4 4 0 0 1 1.6-8z" fill="#e0dc20" stroke="#a09800" stroke-width="0.9" />
<path d="M701.5 770.0a7.8 7.8 0 0 0 1-15l-0.5-2.6l-5 3.6l5.6 3.2l-0.4-1.6a4 4 0 0 1-1.6 8z" fill="#48a8c8" stroke="#206888" stroke-width="0.9" />
<path d="M713.00 761.80 L720.40 761.80 L716.70 766.20Z" fill="#000" />
<line x1="735.30" y1="756.90" x2="739.00" y2="756.90" stroke="#e02020" stroke-width="1.2" />
<line x1="735.30" y1="761.90" x2="739.00" y2="761.90" stroke="#2020e0" stroke-width="1.2" />
<line x1="748.00" y1="759.40" x2="752.40" y2="759.40" stroke="#e02020" stroke-width="1.2" />
<path d="M738.40 753.60 L749.00 759.40 L738.40 765.20Z" fill="#f8dc00" stroke="#907000" stroke-width="1" />
<path d="M740.6 759.4h3.6M742.4 757.6v3.6" fill="none" stroke="#000" stroke-width="1.1" />
<line x1="758.00" y1="752.10" x2="757.20" y2="760.60" stroke="#9a6a28" stroke-width="2" />
<path d="M754.00 760.20 L760.40 759.80 L761.80 770.20 L747.40 771.20 L750.00 764.60Z" fill="#8a5a28" stroke="#5a3a18" stroke-width="0.8" />
<path d="M753 763.6l-2.4 6M756 763.2l-1.2 7M759 763.2l0.4 6.6" fill="none" stroke="#c09050" stroke-width="0.8" />
<path d="M1363.50 760.60 L1368.50 763.90 L1363.50 767.20Z" fill="#000" />
<line x1="1372.00" y1="754.60" x2="1372.00" y2="770.60" stroke="#555" stroke-width="1" />
<rect x="1378.00" y="750.60" width="170.00" height="24.60" fill="#fff" />
<text x="1380.80" y="768.90" font-size="15" fill="#707070" font-family="Liberation Sans, sans-serif" textLength="45.00" lengthAdjust="spacingAndGlyphs" >Search</text>
<circle cx="1523.5" cy="759.6" r="6.3" fill="#dceeff" stroke="#9db8d6" stroke-width="1.6"/>
<line x1="1528.50" y1="764.60" x2="1537.00" y2="771.60" stroke="#c08a50" stroke-width="3" />
<rect x="1554.10" y="751.50" width="23.80" height="22.40" fill="#c4c4c4" stroke="#555" stroke-width="1" />
<text x="1566.00" y="771.10" font-size="22" fill="#f4e400" font-family="Liberation Sans, sans-serif" text-anchor="middle" font-weight="bold" stroke="#333" stroke-width="0.9" paint-order="stroke">?</text>
<line x1="1584.30" y1="720.10" x2="1584.30" y2="778.60" stroke="#606060" stroke-width="1.3" />
<rect x="1586.60" y="728.20" width="40.00" height="40.40" fill="#fff" stroke="#000" stroke-width="1.5" />
<rect x="1587.40" y="729.00" width="40.00" height="13.00" fill="#5f8df0" />
<line x1="1586.60" y1="742.50" x2="1626.60" y2="742.50" stroke="#000" stroke-width="1.3" />
<text x="1589.80" y="739.60" font-size="8.6" fill="#000" font-family="Liberation Sans, sans-serif" textLength="34.00" lengthAdjust="spacingAndGlyphs" font-weight="bold" font-style="italic">Json cfg</text>
<rect x="1590.80" y="746.40" width="15.20" height="15.60" fill="#fff" stroke="#222" stroke-width="1.2" />
<rect x="1593.60" y="750.80" width="5.00" height="3.00" fill="none" stroke="#222" stroke-width="1" />
<rect x="1601.10" y="750.40" width="2.40" height="5.00" fill="none" stroke="#222" stroke-width="1" />
<line x1="1593.20" y1="757.20" x2="1598.20" y2="757.20" stroke="#222" stroke-width="1" />
<text x="1609.60" y="766.20" font-size="8" fill="#000" font-family="Liberation Sans, sans-serif" textLength="17.00" lengthAdjust="spacingAndGlyphs" font-weight="bold" font-style="italic">refs</text>
<rect x="46.80" y="780.00" width="1572.20" height="384.00" fill="#fff" />
<rect x="1608.00" y="780.00" width="11.00" height="363.00" fill="#f0f0f0" />
<path d="M1612 793.4l4.6-4.6l4.6 4.6" fill="none" stroke="#555" stroke-width="1.8" />
<rect x="1608.00" y="834.40" width="11.00" height="298.40" fill="#cdcdcd" />
<rect x="0.00" y="1142.00" width="46.80" height="30.00" fill="#fff" />
<text x="91.50" y="848.70" font-size="15" fill="#000" font-family="Liberation Sans, sans-serif" textLength="119.50" lengthAdjust="spacingAndGlyphs" >specific reference</text>
<rect x="90.90" y="856.10" width="39.20" height="17.80" fill="#fff" stroke="#008080" stroke-width="2.6" />
<rect x="94.25" y="859.45" width="32.50" height="11.10" fill="#fff" stroke="#008080" stroke-width="1.3" />
<rect x="118.40" y="858.80" width="9.00" height="12.40" fill="#a8d4d4" />
<line x1="126.80" y1="858.80" x2="126.80" y2="871.20" stroke="#008080" stroke-width="1.3" />
<path d="M123.90 861.00 L128.40 865.00 L123.90 869.00Z" fill="#000" />
<path d="M104.6 861.4h3.6l2.2 2.2v5h-5.8z" fill="#fff" stroke="#008080" stroke-width="1.1" />
<text x="91.50" y="904.70" font-size="15" fill="#000" font-family="Liberation Sans, sans-serif" textLength="117.30" lengthAdjust="spacingAndGlyphs" >error in (no error)</text>
<rect x="90.90" y="912.10" width="39.20" height="17.90" fill="#fff" stroke="#808000" stroke-width="2.6" />
<rect x="94.25" y="915.45" width="32.50" height="11.20" fill="#fff" stroke="#808000" stroke-width="1.3" />
<rect x="118.40" y="914.80" width="9.00" height="12.50" fill="#d4d4a8" />
<line x1="126.80" y1="914.80" x2="126.80" y2="927.30" stroke="#808000" stroke-width="1.3" />
<path d="M123.90 917.05 L128.40 921.05 L123.90 925.05Z" fill="#000" />
<rect x="100.60" y="917.45" width="5.50" height="2.40" fill="#fff" stroke="#808000" stroke-width="1" />
<rect x="109.10" y="916.85" width="3.50" height="1.30" fill="#808000" />
<rect x="115.10" y="916.45" width="1.60" height="3.20" fill="#808000" />
<rect x="98.90" y="922.35" width="3.60" height="2.40" fill="#808000" />
<rect x="106.60" y="921.75" width="5.00" height="3.20" fill="#808000" />
<rect x="115.10" y="921.95" width="3.00" height="3.00" fill="#fff" stroke="#808000" stroke-width="1" />
<polyline points="131.40,865.00 225.80,865.00 225.80,910.00 238.40,910.00" fill="none" stroke="#008080" stroke-width="1.5" />
<polyline points="131.40,921.30 238.40,921.30" fill="none" stroke="#808000" stroke-width="4.0" stroke-linejoin="miter"/>
<polyline points="131.40,921.30 238.40,921.30" fill="none" stroke="#e8e800" stroke-width="2.0" />
<polyline points="131.40,921.30 238.40,921.30" fill="none" stroke="#000" stroke-width="2.0" stroke-dasharray="2.4 2.8"/>
<rect x="239.00" y="904.80" width="89.30" height="22.40" fill="#ffffd4" stroke="#6b6b55" stroke-width="1.2" />
<path d="M242.9 907.7h3.2l2 2v3.8h-5.2z" fill="none" stroke="#000" stroke-width="1" />
<text x="242.30" y="925.40" font-size="8.4" fill="#000" font-family="Liberation Sans, sans-serif" textLength="6.60" lengthAdjust="spacingAndGlyphs" font-weight="bold" >?!</text>
<path d="M317.9 907.7h3.2l2 2v3.8h-5.2z" fill="none" stroke="#000" stroke-width="1" />
<text x="317.30" y="925.40" font-size="8.4" fill="#000" font-family="Liberation Sans, sans-serif" textLength="6.60" lengthAdjust="spacingAndGlyphs" font-weight="bold" >?!</text>
<line x1="256.00" y1="916.30" x2="265.40" y2="916.30" stroke="#000" stroke-width="2.9" />
<circle cx="267.80" cy="916.30" r="2.7" fill="#fff" stroke="#000" stroke-width="1.6"/>
<rect x="269.20" y="914.90" width="2.60" height="2.80" fill="#ffffd4" />
<text x="276.70" y="920.20" font-size="15" fill="#222" font-family="Liberation Sans, sans-serif" textLength="34.00" lengthAdjust="spacingAndGlyphs" >Clust</text>
<rect x="239.05" y="927.45" width="89.20" height="22.60" fill="#fff" stroke="#6b6b55" stroke-width="1.3" />
<path d="M322.90 935.55 L326.90 939.05 L322.90 942.55Z" fill="#000" />
<text x="247.00" y="944.80" font-size="15.5" fill="#3a9a9a" font-family="Liberation Sans, sans-serif" textLength="68.50" lengthAdjust="spacingAndGlyphs" >Controls[]</text>
<polyline points="328.90,921.30 344.60,921.30" fill="none" stroke="#808000" stroke-width="4.0" stroke-linejoin="miter"/>
<polyline points="328.90,921.30 344.60,921.30" fill="none" stroke="#e8e800" stroke-width="2.0" />
<polyline points="328.90,921.30 344.60,921.30" fill="none" stroke="#000" stroke-width="2.0" stroke-dasharray="2.4 2.8"/>
<polyline points="328.90,937.70 344.60,937.70" fill="none" stroke="#008080" stroke-width="3.2" />
<path fill-rule="evenodd" fill="#808080" d="M349 842.6H952.5Q956.8 842.6 956.8 847V1081.8H949.4V850H351.4V1087.4H946.8V1085H956.8V1095H349Q344 1095 344 1090V847.6Q344 842.6 349 842.6Z"/>
<polyline points="354.60,921.30 452.40,921.30 452.40,970.80 465.30,970.80" fill="none" stroke="#808000" stroke-width="4.0" stroke-linejoin="miter"/>
<polyline points="354.60,921.30 452.40,921.30 452.40,970.80 465.30,970.80" fill="none" stroke="#e8e800" stroke-width="2.0" />
<polyline points="354.60,921.30 452.40,921.30 452.40,970.80 465.30,970.80" fill="none" stroke="#000" stroke-width="2.0" stroke-dasharray="2.4 2.8"/>
<polyline points="364.40,937.70 396.20,937.70" fill="none" stroke="#008080" stroke-width="3.2" />
<polyline points="437.00,937.70 448.60,937.70" fill="none" stroke="#008080" stroke-width="3.2" />
<polyline points="455.80,937.70 557.00,937.70" fill="none" stroke="#008080" stroke-width="3.2" />
<polyline points="385.20,964.00 396.20,964.00" fill="none" stroke="#0000ff" stroke-width="1.5" />
<polyline points="437.00,959.20 448.60,959.20" fill="none" stroke="#3a9a9a" stroke-width="1.5" />
<polyline points="455.80,959.20 465.30,959.20" fill="none" stroke="#3a9a9a" stroke-width="1.5" />
<rect x="344.90" y="916.60" width="9.40" height="9.80" fill="#808000" stroke="#4a4230" stroke-width="1" />
<rect x="345.15" y="931.25" width="18.10" height="13.20" fill="#ffffd4" stroke="#008080" stroke-width="2.3" />
<path d="M348.60 934.60 L359.80 934.60 L354.20 941.40Z" fill="#008080" />
<rect x="369.70" y="953.50" width="14.30" height="22.00" fill="#fff" stroke="#0000ff" stroke-width="2.6" />
<text x="376.90" y="970.20" font-size="15" fill="#222" font-family="Liberation Sans, sans-serif" text-anchor="middle" >0</text>
<rect x="396.75" y="928.05" width="39.80" height="41.40" fill="#ffffd4" stroke="#7a7a66" stroke-width="1.3" />
<rect x="403.00" y="933.60" width="11.20" height="15.90" fill="#c8c8a8" stroke="#111" stroke-width="1" />
<rect x="400.60" y="931.20" width="11.20" height="15.90" fill="#ffffd4" stroke="#111" stroke-width="1.3" />
<line x1="406.20" y1="931.20" x2="406.20" y2="947.10" stroke="#111" stroke-width="1.1" />
<line x1="400.60" y1="936.50" x2="411.80" y2="936.50" stroke="#111" stroke-width="1.1" />
<line x1="400.60" y1="941.80" x2="411.80" y2="941.80" stroke="#111" stroke-width="1.1" />
<rect x="422.40" y="933.60" width="11.20" height="10.60" fill="#c8c8a8" stroke="#111" stroke-width="1" />
<rect x="420.00" y="931.20" width="11.20" height="10.60" fill="#ffffd4" stroke="#111" stroke-width="1.3" />
<line x1="425.60" y1="931.20" x2="425.60" y2="941.80" stroke="#111" stroke-width="1.1" />
<line x1="420.00" y1="936.50" x2="431.20" y2="936.50" stroke="#111" stroke-width="1.1" />
<rect x="416.40" y="946.00" width="1.00" height="1.60" fill="#111" />
<rect x="421.60" y="946.60" width="1.00" height="1.00" fill="#111" />
<path d="M399 952v5.6M408.6 952v5.6M400 954.8h7.6M404 953v3.6" fill="none" stroke="#111" stroke-width="1.1" />
<rect x="400.40" y="964.40" width="4.80" height="3.00" fill="#111" />
<rect x="406.60" y="966.60" width="1.00" height="1.00" fill="#111" />
<path d="M410.6 967.6v-5M408.8 964.2l1.8-2l1.8 2M409.2 965.4h2.8" fill="none" stroke="#111" stroke-width="1" />
<rect x="422.40" y="956.60" width="5.60" height="5.60" fill="none" stroke="#111" stroke-width="1.3" />
<rect x="465.90" y="953.80" width="78.70" height="23.20" fill="#ffffd4" stroke="#6b6b55" stroke-width="1.2" />
<path d="M469.8 956.7h3.2l2 2v3.8h-5.2z" fill="none" stroke="#000" stroke-width="1" />
<text x="469.20" y="975.20" font-size="8.4" fill="#000" font-family="Liberation Sans, sans-serif" textLength="6.60" lengthAdjust="spacingAndGlyphs" font-weight="bold" >?!</text>
<path d="M534.2 956.7h3.2l2 2v3.8h-5.2z" fill="none" stroke="#000" stroke-width="1" />
<text x="533.60" y="975.20" font-size="8.4" fill="#000" font-family="Liberation Sans, sans-serif" textLength="6.60" lengthAdjust="spacingAndGlyphs" font-weight="bold" >?!</text>
<line x1="482.90" y1="965.70" x2="492.30" y2="965.70" stroke="#000" stroke-width="2.9" />
<circle cx="494.70" cy="965.70" r="2.7" fill="#fff" stroke="#000" stroke-width="1.6"/>
<rect x="496.10" y="964.30" width="2.60" height="2.80" fill="#ffffd4" />
<text x="505.10" y="970.00" font-size="15" fill="#222" font-family="Liberation Sans, sans-serif" textLength="19.40" lengthAdjust="spacingAndGlyphs" >Ctl</text>
<rect x="465.95" y="977.25" width="78.60" height="21.50" fill="#fff" stroke="#6b6b55" stroke-width="1.3" />
<path d="M539.20 984.80 L543.20 988.30 L539.20 991.80Z" fill="#000" />
<text x="478.00" y="993.50" font-size="15.5" fill="#0000ff" font-family="Liberation Sans, sans-serif" textLength="49.50" lengthAdjust="spacingAndGlyphs" >ClassID</text>
<rect x="465.95" y="999.05" width="78.60" height="22.30" fill="#fff" stroke="#6b6b55" stroke-width="1.3" />
<path d="M539.20 1007.00 L543.20 1010.50 L539.20 1014.00Z" fill="#000" />
<text x="467.50" y="1016.10" font-size="15.5" fill="#ff00ff" font-family="Liberation Sans, sans-serif" textLength="69.50" lengthAdjust="spacingAndGlyphs" >Label.Text</text>
<polyline points="545.20,959.20 557.00,959.20" fill="none" stroke="#3a9a9a" stroke-width="1.5" />
<polyline points="545.20,970.90 557.00,970.90" fill="none" stroke="#808000" stroke-width="4.0" stroke-linejoin="miter"/>
<polyline points="545.20,970.90 557.00,970.90" fill="none" stroke="#e8e800" stroke-width="2.0" />
<polyline points="545.20,970.90 557.00,970.90" fill="none" stroke="#000" stroke-width="2.0" stroke-dasharray="2.4 2.8"/>
<polyline points="545.20,987.40 556.40,987.40" fill="none" stroke="#0000ff" stroke-width="1.5" />
<path d="M545.20 1009.60q2.95 2.20 5.90 0.00q2.95 2.20 5.90 0.00" fill="none" stroke="#ff00ff" stroke-width="1.5" />
<path fill-rule="evenodd" fill="url(#hatch)" d="M556.1 871.7H865.8V1067.8H556.1Z M563.8000000000001 879.4000000000001V1060.1H858.0999999999999V879.4000000000001Z"/>
<rect x="556.80" y="872.40" width="308.30" height="194.70" fill="none" stroke="#000" stroke-width="1.4" />
<path d="M556.1 1066.8999999999999H864.9V871.7" fill="none" stroke="#000" stroke-width="1.8" />
<rect x="563.50" y="879.10" width="294.90" height="181.30" fill="none" stroke="#333" stroke-width="0.6" />
<rect x="655.65" y="872.45" width="109.50" height="20.50" fill="#fff" stroke="#222" stroke-width="1.3" />
<line x1="665.80" y1="871.80" x2="665.80" y2="893.60" stroke="#222" stroke-width="1.3" />
<line x1="755.00" y1="871.80" x2="755.00" y2="893.60" stroke="#222" stroke-width="1.3" />
<path d="M657.50 882.70 L664.30 878.70 L664.30 886.70Z" fill="#000" />
<path d="M763.30 882.70 L756.50 878.70 L756.50 886.70Z" fill="#000" />
<path d="M742.50 880.20 L751.50 880.20 L747.00 885.20Z" fill="#000" />
<text x="670.60" y="888.30" font-size="15" fill="#000" font-family="Liberation Sans, sans-serif" textLength="48.50" lengthAdjust="spacingAndGlyphs" >Default</text>
<polyline points="567.20,937.80 855.00,937.80" fill="none" stroke="#008080" stroke-width="3.2" />
<polyline points="567.20,971.00 702.20,971.00 702.20,1040.00 855.00,1040.00" fill="none" stroke="#808000" stroke-width="4.0" stroke-linejoin="miter"/>
<polyline points="567.20,971.00 702.20,971.00 702.20,1040.00 855.00,1040.00" fill="none" stroke="#e8e800" stroke-width="2.0" />
<polyline points="567.20,971.00 702.20,971.00 702.20,1040.00 855.00,1040.00" fill="none" stroke="#000" stroke-width="2.0" stroke-dasharray="2.4 2.8"/>
<rect x="557.30" y="933.10" width="9.60" height="9.60" fill="#008080" stroke="#4a4230" stroke-width="1" />
<rect x="557.30" y="954.10" width="9.60" height="10.00" fill="#008080" stroke="#4a4230" stroke-width="1" />
<rect x="557.30" y="964.70" width="9.60" height="11.40" fill="#808000" stroke="#4a4230" stroke-width="1" />
<rect x="556.85" y="980.45" width="8.90" height="13.50" fill="#ffffd4" stroke="#0000ff" stroke-width="1.3" />
<text x="561.30" y="991.60" font-size="12.5" fill="#0000ff" font-family="Liberation Sans, sans-serif" text-anchor="middle" >?</text>
<rect x="557.30" y="1004.70" width="9.60" height="10.00" fill="#ff00ff" stroke="#4a4230" stroke-width="1" />
<rect x="855.30" y="933.30" width="9.60" height="9.80" fill="#008080" stroke="#4a4230" stroke-width="1" />
<rect x="855.30" y="954.10" width="9.60" height="9.80" fill="#008080" stroke="#4a4230" stroke-width="1" />
<rect x="858.50" y="957.40" width="3.20" height="3.20" fill="none" stroke="#fff" stroke-width="1" />
<rect x="855.30" y="964.50" width="9.60" height="9.80" fill="#108020" stroke="#4a4230" stroke-width="1" />
<rect x="858.50" y="967.80" width="3.20" height="3.20" fill="none" stroke="#fff" stroke-width="1" />
<rect x="855.30" y="1005.10" width="9.60" height="9.80" fill="#ff00ff" stroke="#4a4230" stroke-width="1" />
<rect x="858.50" y="1008.40" width="3.20" height="3.20" fill="none" stroke="#fff" stroke-width="1" />
<rect x="855.30" y="1015.50" width="9.60" height="10.60" fill="#108020" stroke="#4a4230" stroke-width="1" />
<rect x="858.50" y="1019.20" width="3.20" height="3.20" fill="none" stroke="#fff" stroke-width="1" />
<rect x="855.30" y="1035.10" width="9.60" height="9.60" fill="#808000" stroke="#4a4230" stroke-width="1" />
<polyline points="865.40,937.80 937.00,937.80" fill="none" stroke="#008080" stroke-width="3.2" />
<circle cx="882.8" cy="937.8" r="2.8" fill="#008080"/>
<polyline points="882.80,937.80 882.80,921.00" fill="none" stroke="#008080" stroke-width="3" />
<polyline points="865.40,959.00 946.00,959.00" fill="none" stroke="#008080" stroke-width="1.5" />
<polyline points="866.00,969.60 946.00,969.60" fill="none" stroke="#009000" stroke-width="1.4" stroke-dasharray="1.4 1.4"/>
<path d="M865.40 1009.80q2.52 2.20 5.04 0.00q2.52 2.20 5.04 0.00q2.52 2.20 5.04 0.00q2.52 2.20 5.04 0.00q2.52 2.20 5.04 0.00q2.52 2.20 5.04 0.00q2.52 2.20 5.04 0.00q2.52 2.20 5.04 0.00q2.52 2.20 5.04 0.00q2.52 2.20 5.04 0.00q2.52 2.20 5.04 0.00q2.52 2.20 5.04 0.00q2.52 2.20 5.04 0.00q2.52 2.20 5.04 0.00q2.52 2.20 5.04 0.00q2.52 2.20 5.04 0.00" fill="none" stroke="#ff00ff" stroke-width="1.5" />
<polyline points="866.00,1021.60 946.00,1021.60" fill="none" stroke="#009000" stroke-width="1.4" stroke-dasharray="1.4 1.4"/>
<polyline points="865.40,1040.00 1030.00,1040.00" fill="none" stroke="#808000" stroke-width="4.0" stroke-linejoin="miter"/>
<polyline points="865.40,1040.00 1030.00,1040.00" fill="none" stroke="#e8e800" stroke-width="2.0" />
<polyline points="865.40,1040.00 1030.00,1040.00" fill="none" stroke="#000" stroke-width="2.0" stroke-dasharray="2.4 2.8"/>
<path d="M876.20 896.00 L903.60 909.20 L876.20 922.40Z" fill="#ffffd4" stroke="#8a8a74" stroke-width="1.3" />
<text x="878.40" y="913.40" font-size="9.5" fill="#333" font-family="Liberation Sans, sans-serif" textLength="14.50" lengthAdjust="spacingAndGlyphs" font-weight="bold" >[]?</text>
<polyline points="904.00,909.30 914.00,909.30" fill="none" stroke="#009000" stroke-width="1.4" stroke-dasharray="1.4 1.4"/>
<rect x="914.90" y="899.70" width="19.20" height="19.40" fill="#d8f4d0" stroke="#109020" stroke-width="1.4" />
<path d="M931.71 912.38 L927.48 916.61 L921.52 916.61 L917.29 912.38 L917.29 906.42 L921.52 902.19 L927.48 902.19 L931.71 906.42Z" fill="#fff" stroke="#111" stroke-width="1.1" />
<circle cx="924.5" cy="909.4" r="5.4" fill="#ff0000"/>
<rect x="937.55" y="931.25" width="18.10" height="13.20" fill="#ffffd4" stroke="#008080" stroke-width="2.3" />
<path d="M941.00 941.20 L952.20 941.20 L946.60 934.40Z" fill="#008080" />
<rect x="946.20" y="953.80" width="9.60" height="22.20" fill="#ffffd4" stroke="#77775f" stroke-width="1.2" />
<text x="951.00" y="961.60" font-size="7.5" fill="#008080" font-family="Liberation Sans, sans-serif" textLength="6.40" lengthAdjust="spacingAndGlyphs" text-anchor="middle" font-weight="bold" >[]</text>
<text x="951.00" y="974.20" font-size="9.5" fill="#109020" font-family="Liberation Sans, sans-serif" text-anchor="middle" font-weight="bold" >?</text>
<rect x="946.20" y="1005.20" width="9.60" height="21.60" fill="#ffffd4" stroke="#77775f" stroke-width="1.2" />
<text x="951.00" y="1013.00" font-size="7.5" fill="#ff00ff" font-family="Liberation Sans, sans-serif" textLength="6.40" lengthAdjust="spacingAndGlyphs" text-anchor="middle" font-weight="bold" >[]</text>
<text x="951.00" y="1025.00" font-size="9.5" fill="#109020" font-family="Liberation Sans, sans-serif" text-anchor="middle" font-weight="bold" >?</text>
<rect x="946.30" y="1035.10" width="9.60" height="9.60" fill="#808000" stroke="#4a4230" stroke-width="1" />
<polyline points="956.40,958.40 973.00,958.40" fill="none" stroke="#008080" stroke-width="3" />
<polyline points="956.40,1009.60 973.00,1009.60" fill="none" stroke="#ff00ff" stroke-width="4.3" />
<polyline points="956.40,1009.60 973.00,1009.60" fill="none" stroke="#fff" stroke-width="2.0" stroke-dasharray="2.7 2.45" stroke-dashoffset="-1.2"/>
<text x="974.30" y="942.50" font-size="15" fill="#000" font-family="Liberation Sans, sans-serif" textLength="78.70" lengthAdjust="spacingAndGlyphs" >All refnums</text>
<rect x="973.50" y="949.30" width="40.10" height="18.80" fill="#fff" stroke="#008080" stroke-width="1.4" />
<rect x="976.00" y="951.80" width="9.00" height="13.80" fill="#a8d4d4" />
<path d="M976.30 954.40 L980.80 958.70 L976.30 963.00Z" fill="#000" />
<text x="983.30" y="962.70" font-size="12" fill="#008080" font-family="Liberation Sans, sans-serif" >[</text>
<path d="M991.3 955.5h3.2l2 2v4.4h-5.2z" fill="#fff" stroke="#008080" stroke-width="1.1" />
<text x="1001.30" y="962.70" font-size="12" fill="#008080" font-family="Liberation Sans, sans-serif" >]</text>
<text x="974.30" y="993.00" font-size="15" fill="#000" font-family="Liberation Sans, sans-serif" textLength="66.70" lengthAdjust="spacingAndGlyphs" >All names</text>
<rect x="973.50" y="999.70" width="40.20" height="19.20" fill="#fff" stroke="#ff00ff" stroke-width="1.4" />
<rect x="976.00" y="1002.20" width="9.00" height="14.20" fill="#ffb8ff" />
<path d="M976.30 1005.00 L980.80 1009.30 L976.30 1013.60Z" fill="#000" />
<text x="982.30" y="1013.30" font-size="12" fill="#ff00ff" font-family="Liberation Sans, sans-serif" >[</text>
<text x="985.30" y="1012.90" font-size="11" fill="#ff00ff"  textLength="16.00" lengthAdjust="spacingAndGlyphs" font-weight="bold" font-family="Liberation Serif, serif">abc</text>
<text x="1002.30" y="1013.30" font-size="12" fill="#ff00ff" font-family="Liberation Sans, sans-serif" >]</text>
<text x="1031.90" y="1028.40" font-size="15" fill="#000" font-family="Liberation Sans, sans-serif" textLength="59.30" lengthAdjust="spacingAndGlyphs" >error out</text>
<rect x="1030.70" y="1034.90" width="40.40" height="19.20" fill="#fff" stroke="#8c8c3c" stroke-width="1.4" />
<rect x="1033.20" y="1037.40" width="35.40" height="14.20" fill="#fff" stroke="#8c8c3c" stroke-width="1.2" />
<rect x="1033.20" y="1037.40" width="9.00" height="14.20" fill="#d4d4a8" />
<path d="M1033.50 1040.20 L1038.00 1044.50 L1033.50 1048.80Z" fill="#000" />
<rect x="1044.00" y="1040.90" width="5.50" height="2.40" fill="#fff" stroke="#8c8c3c" stroke-width="1" />
<rect x="1052.50" y="1040.30" width="3.50" height="1.30" fill="#8c8c3c" />
<rect x="1058.50" y="1039.90" width="1.60" height="3.20" fill="#8c8c3c" />
<rect x="1042.30" y="1045.80" width="3.60" height="2.40" fill="#8c8c3c" />
<rect x="1050.00" y="1045.20" width="5.00" height="3.20" fill="#8c8c3c" />
<rect x="1058.50" y="1045.40" width="3.00" height="3.00" fill="#fff" stroke="#8c8c3c" stroke-width="1" />
<rect x="357.90" y="1062.30" width="18.60" height="18.80" fill="#ffffd4" stroke="#0000ff" stroke-width="2.6" />
<text x="367.20" y="1078.60" font-size="16" fill="#0000e0" font-family="Liberation Sans, sans-serif" text-anchor="middle" font-weight="bold" >i</text>
<g style="mix-blend-mode:multiply">
<defs><path id="yl" d="M363.0 753.0C374.2 753.1 407.2 752.5 430.0 753.5C452.8 754.5 478.3 756.9 500.0 759.0C521.7 761.1 541.8 763.6 560.0 766.0C578.2 768.4 592.5 770.3 609.0 773.4C625.5 776.5 642.5 781.2 659.0 784.5C675.5 787.8 691.5 790.5 708.0 793.0C724.5 795.5 741.5 797.2 758.0 799.3C774.5 801.4 790.6 802.8 807.0 805.5C823.4 808.2 840.0 811.9 856.5 815.4C873.0 818.9 889.6 822.2 906.0 826.5C922.4 830.8 941.2 837.2 955.0 841.3C968.8 845.4 975.0 846.9 989.0 851.0C1003.0 855.1 1022.5 860.7 1039.0 866.0C1055.5 871.3 1071.5 876.7 1088.0 882.8C1104.5 888.9 1121.5 895.7 1138.0 902.5C1154.5 909.3 1170.6 916.0 1187.0 923.5C1203.4 931.0 1220.0 939.3 1236.5 947.6C1253.0 955.9 1269.6 963.3 1286.0 973.5C1302.4 983.7 1324.3 1000.5 1335.0 1009.0C1345.7 1017.5 1344.5 1017.7 1350.0 1024.5C1355.5 1031.3 1364.0 1042.1 1368.0 1050.0C1372.0 1057.9 1373.7 1064.3 1373.7 1072.0C1373.7 1079.7 1372.3 1088.3 1368.0 1096.0C1363.7 1103.7 1357.5 1110.9 1348.0 1118.0C1338.5 1125.1 1321.5 1133.8 1311.0 1138.6C1300.5 1143.4 1296.8 1144.6 1285.0 1147.0C1273.2 1149.4 1262.5 1152.0 1240.0 1153.0C1217.5 1154.0 1177.5 1153.4 1150.0 1153.0C1122.5 1152.6 1103.9 1152.7 1075.0 1150.5C1046.1 1148.3 1009.4 1143.5 976.5 1140.0C943.6 1136.5 910.7 1133.1 877.7 1129.6C844.8 1126.1 809.2 1122.4 778.8 1119.0C748.3 1115.6 725.4 1113.3 695.0 1109.0C664.6 1104.7 629.4 1098.7 596.5 1093.4C563.6 1088.1 530.5 1083.4 497.6 1077.4C464.7 1071.4 424.3 1062.8 399.0 1057.6C373.7 1052.4 362.5 1050.4 346.0 1046.4C329.5 1042.4 314.4 1037.6 300.0 1033.5C285.6 1029.4 280.6 1028.0 259.4 1022.0C238.2 1016.0 201.8 1006.3 173.0 997.3C144.2 988.3 108.2 975.3 86.5 968.0C64.8 960.7 54.1 958.5 43.0 953.5C31.9 948.5 25.7 943.2 20.0 938.0C14.3 932.8 11.4 927.5 9.0 922.0C6.6 916.5 5.9 910.7 5.5 905.0C5.1 899.3 4.8 894.9 6.5 888.0C8.2 881.1 8.2 874.3 15.4 863.5C22.6 852.7 39.6 832.6 49.4 823.0C59.2 813.4 65.8 810.9 74.0 806.0C82.2 801.1 86.5 798.1 98.8 793.7C111.1 789.3 131.5 783.0 148.0 779.5C164.5 776.0 181.2 774.1 197.7 772.7C214.2 771.3 230.5 771.4 247.0 771.0C263.5 770.6 277.2 770.1 296.5 770.3C315.8 770.5 344.1 771.0 363.0 772.0C381.9 773.0 397.8 774.3 410.0 776.0C422.2 777.7 429.8 779.7 436.0 782.0C442.2 784.3 445.2 788.7 447.0 790.0 M356.0 500.0C356.6 501.7 357.5 501.7 359.5 510.0C361.5 518.3 363.6 534.5 368.0 550.0C372.4 565.5 379.8 585.2 386.0 603.0C392.2 620.8 399.4 640.4 405.0 656.6C410.6 672.8 415.7 690.4 419.5 700.0C423.3 709.6 424.9 706.7 428.0 714.0C431.1 721.3 435.3 734.7 438.0 744.0C440.7 753.3 442.5 762.3 444.0 770.0C445.5 777.7 446.5 786.7 447.0 790.0"/><path id="yc" d="M356.5 433.9C355.6 433.5 352.9 432.3 350.9 431.8C348.8 431.3 346.9 430.8 344.2 430.6C341.6 430.3 338.1 430.2 335.0 430.2C331.9 430.3 328.4 430.4 325.8 430.7C323.1 431.0 321.2 431.5 319.1 432.1C317.1 432.7 315.2 433.4 313.5 434.3C311.7 435.1 310.1 436.1 308.7 437.3C307.2 438.4 305.9 439.6 304.7 441.0C303.5 442.4 302.5 443.9 301.6 445.5C300.7 447.1 299.9 448.9 299.3 450.8C298.7 452.7 298.3 454.5 298.0 457.0C297.7 459.4 297.5 462.7 297.5 465.5C297.5 468.3 297.7 471.6 298.0 474.0C298.3 476.4 298.7 478.2 299.3 480.1C299.9 482.0 300.7 483.6 301.6 485.2C302.5 486.8 303.5 488.2 304.7 489.6C305.9 490.9 307.2 492.1 308.7 493.1C310.1 494.2 311.7 495.1 313.5 495.9C315.2 496.7 317.1 497.4 319.1 497.9C321.2 498.4 323.1 498.8 325.8 499.0C328.4 499.3 331.9 499.4 335.0 499.4C338.1 499.4 341.6 499.2 344.2 498.9C346.9 498.6 348.8 498.2 350.9 497.6C352.9 497.0 354.8 496.3 356.5 495.5C358.3 494.7 359.9 493.7 361.3 492.6C362.8 491.6 364.1 490.3 365.3 489.0C366.5 487.7 367.5 486.3 368.4 484.7C369.3 483.1 370.1 481.5 370.7 479.6C371.3 477.8 371.7 476.1 372.0 473.7C372.3 471.3 372.5 468.2 372.5 465.5C372.5 462.8 372.3 459.7 372.0 457.3C371.7 455.0 371.3 453.3 370.7 451.5C370.1 449.7 369.3 448.1 368.4 446.6C367.5 445.1 366.5 443.7 365.3 442.4C364.1 441.1 362.8 440.0 361.3 439.0C359.9 438.0 358.3 437.1 356.5 436.3C354.8 435.6 352.9 434.9 350.9 434.4C348.8 433.9 346.9 433.6 344.2 433.3C341.6 433.1 336.5 433.1 335.0 433.0"/></defs>
<use href="#yl" x="-3.5" y="-11" fill="none" stroke="#ffff00" stroke-width="3" stroke-linecap="round" stroke-linejoin="round"/>
<use href="#yl" x="-3.5" y="-8.56" fill="none" stroke="#ffff00" stroke-width="3" stroke-linecap="round" stroke-linejoin="round"/>
<use href="#yl" x="-3.5" y="-6.11" fill="none" stroke="#ffff00" stroke-width="3" stroke-linecap="round" stroke-linejoin="round"/>
<use href="#yl" x="-3.5" y="-3.67" fill="none" stroke="#ffff00" stroke-width="3" stroke-linecap="round" stroke-linejoin="round"/>
<use href="#yl" x="-3.5" y="-1.22" fill="none" stroke="#ffff00" stroke-width="3" stroke-linecap="round" stroke-linejoin="round"/>
<use href="#yl" x="-3.5" y="1.22" fill="none" stroke="#ffff00" stroke-width="3" stroke-linecap="round" stroke-linejoin="round"/>
<use href="#yl" x="-3.5" y="3.67" fill="none" stroke="#ffff00" stroke-width="3" stroke-linecap="round" stroke-linejoin="round"/>
<use href="#yl" x="-3.5" y="6.11" fill="none" stroke="#ffff00" stroke-width="3" stroke-linecap="round" stroke-linejoin="round"/>
<use href="#yl" x="-3.5" y="8.56" fill="none" stroke="#ffff00" stroke-width="3" stroke-linecap="round" stroke-linejoin="round"/>
<use href="#yl" x="-3.5" y="11" fill="none" stroke="#ffff00" stroke-width="3" stroke-linecap="round" stroke-linejoin="round"/>
<use href="#yl" x="-1.17" y="-11" fill="none" stroke="#ffff00" stroke-width="3" stroke-linecap="round" stroke-linejoin="round"/>
<use href="#yl" x="-1.17" y="-8.56" fill="none" stroke="#ffff00" stroke-width="3" stroke-linecap="round" stroke-linejoin="round"/>
<use href="#yl" x="-1.17" y="-6.11" fill="none" stroke="#ffff00" stroke-width="3" stroke-linecap="round" stroke-linejoin="round"/>
<use href="#yl" x="-1.17" y="-3.67" fill="none" stroke="#ffff00" stroke-width="3" stroke-linecap="round" stroke-linejoin="round"/>
<use href="#yl" x="-1.17" y="-1.22" fill="none" stroke="#ffff00" stroke-width="3" stroke-linecap="round" stroke-linejoin="round"/>
<use href="#yl" x="-1.17" y="1.22" fill="none" stroke="#ffff00" stroke-width="3" stroke-linecap="round" stroke-linejoin="round"/>
<use href="#yl" x="-1.17" y="3.67" fill="none" stroke="#ffff00" stroke-width="3" stroke-linecap="round" stroke-linejoin="round"/>
<use href="#yl" x="-1.17" y="6.11" fill="none" stroke="#ffff00" stroke-width="3" stroke-linecap="round" stroke-linejoin="round"/>
<use href="#yl" x="-1.17" y="8.56" fill="none" stroke="#ffff00" stroke-width="3" stroke-linecap="round" stroke-linejoin="round"/>
<use href="#yl" x="-1.17" y="11" fill="none" stroke="#ffff00" stroke-width="3" stroke-linecap="round" stroke-linejoin="round"/>
<use href="#yl" x="1.17" y="-11" fill="none" stroke="#ffff00" stroke-width="3" stroke-linecap="round" stroke-linejoin="round"/>
<use href="#yl" x="1.17" y="-8.56" fill="none" stroke="#ffff00" stroke-width="3" stroke-linecap="round" stroke-linejoin="round"/>
<use href="#yl" x="1.17" y="-6.11" fill="none" stroke="#ffff00" stroke-width="3" stroke-linecap="round" stroke-linejoin="round"/>
<use href="#yl" x="1.17" y="-3.67" fill="none" stroke="#ffff00" stroke-width="3" stroke-linecap="round" stroke-linejoin="round"/>
<use href="#yl" x="1.17" y="-1.22" fill="none" stroke="#ffff00" stroke-width="3" stroke-linecap="round" stroke-linejoin="round"/>
<use href="#yl" x="1.17" y="1.22" fill="none" stroke="#ffff00" stroke-width="3" stroke-linecap="round" stroke-linejoin="round"/>
<use href="#yl" x="1.17" y="3.67" fill="none" stroke="#ffff00" stroke-width="3" stroke-linecap="round" stroke-linejoin="round"/>
<use href="#yl" x="1.17" y="6.11" fill="none" stroke="#ffff00" stroke-width="3" stroke-linecap="round" stroke-linejoin="round"/>
<use href="#yl" x="1.17" y="8.56" fill="none" stroke="#ffff00" stroke-width="3" stroke-linecap="round" stroke-linejoin="round"/>
<use href="#yl" x="1.17" y="11" fill="none" stroke="#ffff00" stroke-width="3" stroke-linecap="round" stroke-linejoin="round"/>
<use href="#yl" x="3.5" y="-11" fill="none" stroke="#ffff00" stroke-width="3" stroke-linecap="round" stroke-linejoin="round"/>
<use href="#yl" x="3.5" y="-8.56" fill="none" stroke="#ffff00" stroke-width="3" stroke-linecap="round" stroke-linejoin="round"/>
<use href="#yl" x="3.5" y="-6.11" fill="none" stroke="#ffff00" stroke-width="3" stroke-linecap="round" stroke-linejoin="round"/>
<use href="#yl" x="3.5" y="-3.67" fill="none" stroke="#ffff00" stroke-width="3" stroke-linecap="round" stroke-linejoin="round"/>
<use href="#yl" x="3.5" y="-1.22" fill="none" stroke="#ffff00" stroke-width="3" stroke-linecap="round" stroke-linejoin="round"/>
<use href="#yl" x="3.5" y="1.22" fill="none" stroke="#ffff00" stroke-width="3" stroke-linecap="round" stroke-linejoin="round"/>
<use href="#yl" x="3.5" y="3.67" fill="none" stroke="#ffff00" stroke-width="3" stroke-linecap="round" stroke-linejoin="round"/>
<use href="#yl" x="3.5" y="6.11" fill="none" stroke="#ffff00" stroke-width="3" stroke-linecap="round" stroke-linejoin="round"/>
<use href="#yl" x="3.5" y="8.56" fill="none" stroke="#ffff00" stroke-width="3" stroke-linecap="round" stroke-linejoin="round"/>
<use href="#yl" x="3.5" y="11" fill="none" stroke="#ffff00" stroke-width="3" stroke-linecap="round" stroke-linejoin="round"/>
<use href="#yc" y="-5.5" fill="none" stroke="#ffff00" stroke-width="11" stroke-linecap="round" stroke-linejoin="round"/>
<use href="#yc" y="-2.75" fill="none" stroke="#ffff00" stroke-width="11" stroke-linecap="round" stroke-linejoin="round"/>
<use href="#yc" y="0" fill="none" stroke="#ffff00" stroke-width="11" stroke-linecap="round" stroke-linejoin="round"/>
<use href="#yc" y="2.75" fill="none" stroke="#ffff00" stroke-width="11" stroke-linecap="round" stroke-linejoin="round"/>
<use href="#yc" y="5.5" fill="none" stroke="#ffff00" stroke-width="11" stroke-linecap="round" stroke-linejoin="round"/>
<rect x="442.00" y="777.00" width="10.00" height="26.00" fill="#ffff00" />
</g>
</svg></body></html>
